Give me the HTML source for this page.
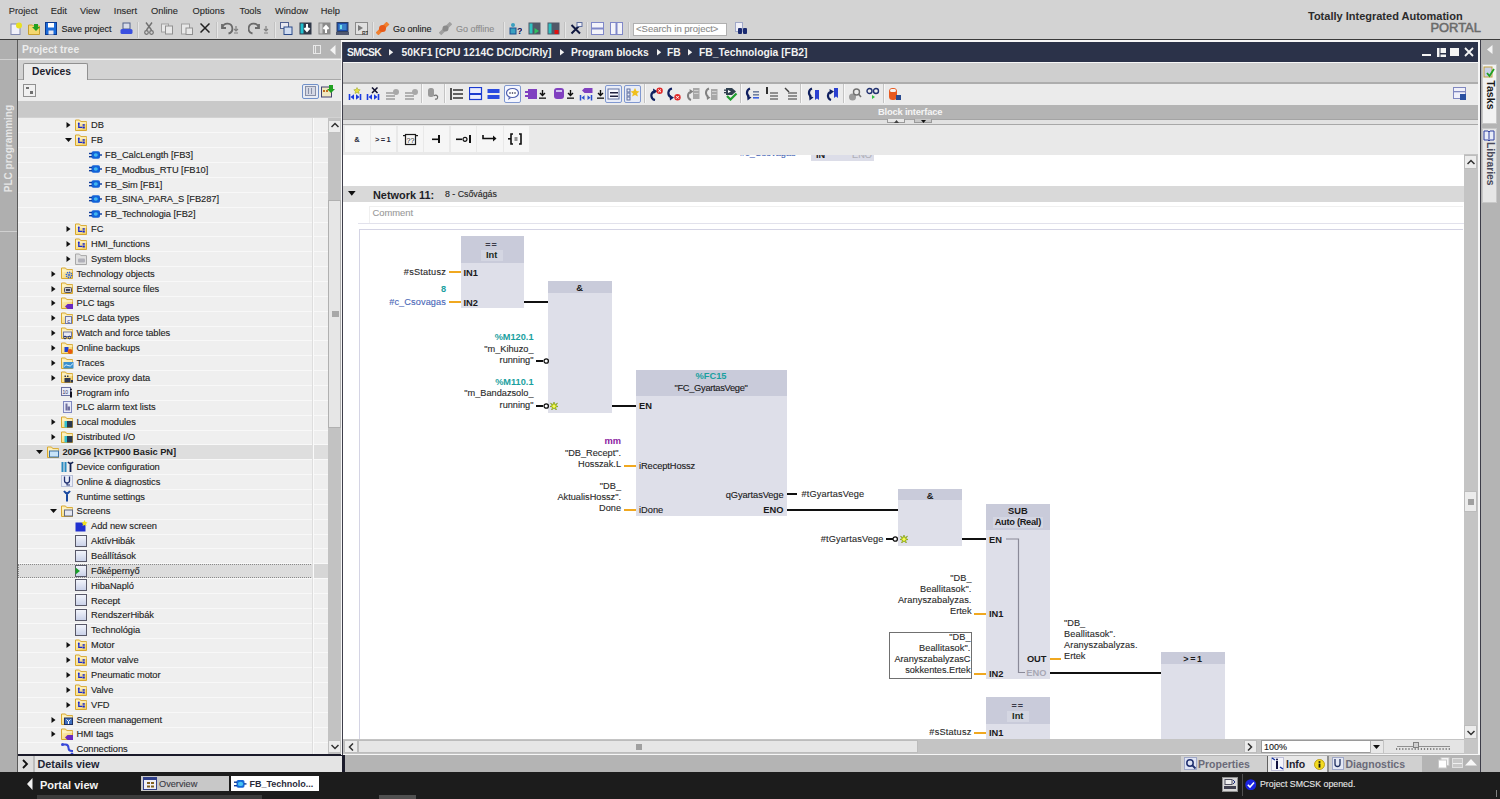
<!DOCTYPE html>
<html><head><meta charset="utf-8">
<style>
html,body{margin:0;padding:0;}
body{width:1500px;height:799px;overflow:hidden;position:relative;background:#d2d2d2;font-family:"Liberation Sans",sans-serif;}
.a{position:absolute;}
.t{position:absolute;white-space:pre;line-height:1.117;}
.t.n{-webkit-text-stroke:0.12px currentColor;}
</style></head><body>

<svg width="0" height="0" style="position:absolute"><defs><linearGradient id="fy" x1="0" y1="0" x2="1" y2="1"><stop offset="0" stop-color="#fff6c8"/><stop offset="1" stop-color="#f0cc60"/></linearGradient><linearGradient id="fs" x1="0" y1="0" x2="0" y2="1"><stop offset="0" stop-color="#f4f6fc"/><stop offset="1" stop-color="#c8d0e8"/></linearGradient></defs></svg>
<div class="a" style="left:0px;top:0px;width:1500px;height:39px;background:#d3d3d3;"></div>
<div class="t n" style="left:8.7px;top:5.88px;font-size:9.3px;color:#2a2a2a;font-weight:normal;">Project</div>
<div class="t n" style="left:50.8px;top:5.88px;font-size:9.3px;color:#2a2a2a;font-weight:normal;">Edit</div>
<div class="t n" style="left:80px;top:5.88px;font-size:9.3px;color:#2a2a2a;font-weight:normal;">View</div>
<div class="t n" style="left:113.8px;top:5.88px;font-size:9.3px;color:#2a2a2a;font-weight:normal;">Insert</div>
<div class="t n" style="left:151px;top:5.88px;font-size:9.3px;color:#2a2a2a;font-weight:normal;">Online</div>
<div class="t n" style="left:192.5px;top:5.88px;font-size:9.3px;color:#2a2a2a;font-weight:normal;">Options</div>
<div class="t n" style="left:239.5px;top:5.88px;font-size:9.3px;color:#2a2a2a;font-weight:normal;">Tools</div>
<div class="t n" style="left:275px;top:5.88px;font-size:9.3px;color:#2a2a2a;font-weight:normal;">Window</div>
<div class="t n" style="left:320.8px;top:5.88px;font-size:9.3px;color:#2a2a2a;font-weight:normal;">Help</div>
<div class="t" style="left:1308px;top:10.04px;font-size:11px;color:#2b2b2b;font-weight:bold;">Totally Integrated Automation</div>
<div class="t n" style="left:1430.5px;top:20.93px;font-size:12.9px;color:#6a6a6a;font-weight:normal;-webkit-text-stroke:0.55px #6a6a6a;">PORTAL</div>
<div class="t n" style="left:61.5px;top:24.36px;font-size:9px;color:#202020;font-weight:normal;">Save project</div>
<div class="t n" style="left:393px;top:24.36px;font-size:9px;color:#202020;font-weight:normal;">Go online</div>
<div class="t n" style="left:456px;top:24.36px;font-size:9px;color:#8c8c8c;font-weight:normal;">Go offline</div>
<div class="a" style="left:633px;top:22.7px;width:94px;height:13.6px;background:#ffffff;border:1px solid #b0b0b0;box-sizing:border-box;"></div>
<div class="t n" style="left:636px;top:23.90px;font-size:9.5px;color:#8a8a8a;font-weight:normal;">&lt;Search in project&gt;</div>
<div class="a" style="left:0px;top:39px;width:1500px;height:1.7px;background:#3a3a3a;"></div>
<div class="a" style="left:0px;top:40.3px;width:17px;height:731.7px;background:#afafaf;"></div>
<div class="a" style="left:0px;top:58.5px;width:17px;height:1.7px;background:#d0d0d0;"></div>
<div class="a" style="left:0px;top:230.5px;width:17px;height:1.2px;background:#d0d0d0;"></div>
<div class="a" style="left:17px;top:40.3px;width:1.2px;height:731.7px;background:#5a5a5a;"></div>
<div class="t" style="left:-38px;top:143px;width:94px;text-align:center;transform:rotate(-90deg);font-size:10px;font-weight:bold;color:#e6e6e6;">PLC programming</div>
<div class="a" style="left:18px;top:40.3px;width:322.7px;height:18.2px;background:#b5b5b5;"></div>
<div class="t" style="left:22px;top:43.59px;font-size:10.4px;color:#ececec;font-weight:bold;">Project tree</div>
<div class="a" style="left:18px;top:58.5px;width:322.7px;height:1.7px;background:#f4f4f4;"></div>
<div class="a" style="left:18px;top:60.2px;width:322.7px;height:20px;background:#d3d3d3;"></div>
<div class="a" style="left:18px;top:79px;width:322.7px;height:1.5px;background:#a8a8a8;"></div>
<div class="a" style="left:23px;top:63px;width:65px;height:17.5px;background:#ececec;border:1px solid #909090;border-bottom:none;box-sizing:border-box;border-radius:2px 2px 0 0;"></div>
<div class="t" style="left:32px;top:65.88px;font-size:10.3px;color:#1e1e2e;font-weight:bold;">Devices</div>
<div class="a" style="left:18px;top:80.2px;width:322.7px;height:21px;background:#ededed;"></div>
<div class="a" style="left:18px;top:101.2px;width:322.7px;height:16.3px;background:#c9c9c9;"></div>
<div class="a" style="left:18px;top:117.5px;width:312px;height:637px;background:#efefef;"></div>
<div class="a" style="left:18px;top:132.36px;width:312px;height:1px;background:#f8f8f8;"></div>
<svg class="a" style="left:65.5px;top:122.13000000000001px;" width="5" height="6" viewBox="0 0 5 6"><path d="M0.5 0 L4.5 3 L0.5 6z" fill="#101010"/></svg>
<svg class="a" style="left:75px;top:118.83000000000001px;" width="13" height="13" viewBox="0 0 13 13"><path d="M0.5 1 h4 l1.3 1.6 h5.7 v8.9 h-11z" fill="url(#fy)" stroke="#d8a830" stroke-width="1"/><path d="M1.5 4 h10" stroke="#fff8d8" stroke-width="1"/><circle cx="3.8" cy="4.6" r="1" fill="#1828d0"/><path d="M3.8 5 v3.3 h3.5" stroke="#1828d0" stroke-width="1.3" fill="none"/><rect x="7.6" y="5.2" width="2.2" height="1.5" fill="#1828d0"/><rect x="7.6" y="7.5" width="2.2" height="2" fill="#1828d0"/></svg>
<div class="t n" style="left:91px;top:120.11px;font-size:9.3px;color:#222222;font-weight:normal;letter-spacing:-0.05px;">DB</div>
<div class="a" style="left:18px;top:147.22000000000003px;width:312px;height:1px;background:#f8f8f8;"></div>
<svg class="a" style="left:64.5px;top:137.99px;" width="7" height="5" viewBox="0 0 7 5"><path d="M0 0 L7 0 L3.5 4z" fill="#101010"/></svg>
<svg class="a" style="left:75px;top:133.69px;" width="13" height="13" viewBox="0 0 13 13"><path d="M0.5 1 h4 l1.3 1.6 h5.7 v8.9 h-11z" fill="url(#fy)" stroke="#d8a830" stroke-width="1"/><path d="M1.5 4 h10" stroke="#fff8d8" stroke-width="1"/><circle cx="3.8" cy="4.6" r="1" fill="#1828d0"/><path d="M3.8 5 v3.3 h3.5" stroke="#1828d0" stroke-width="1.3" fill="none"/><rect x="7.6" y="5.2" width="2.2" height="1.5" fill="#1828d0"/><rect x="7.6" y="7.5" width="2.2" height="2" fill="#1828d0"/></svg>
<div class="t n" style="left:91px;top:134.97px;font-size:9.3px;color:#222222;font-weight:normal;letter-spacing:-0.05px;">FB</div>
<div class="a" style="left:18px;top:162.07999999999998px;width:312px;height:1px;background:#f8f8f8;"></div>
<svg class="a" style="left:89px;top:148.54999999999998px;" width="13" height="13" viewBox="0 0 13 13"><rect x="2.5" y="2.3" width="8.5" height="7.5" rx="1.8" fill="#1262d8"/><ellipse cx="6.8" cy="6" rx="2" ry="1.7" fill="#40b8f0"/><rect x="0" y="3.8" width="3" height="1.4" fill="#0c3a9a"/><rect x="0" y="7" width="3" height="1.4" fill="#0c3a9a"/><rect x="10.5" y="5.3" width="2.5" height="1.4" fill="#0c3a9a"/></svg>
<div class="t n" style="left:105px;top:149.83px;font-size:9.3px;color:#222222;font-weight:normal;letter-spacing:-0.05px;">FB_CalcLength [FB3]</div>
<div class="a" style="left:18px;top:176.94px;width:312px;height:1px;background:#f8f8f8;"></div>
<svg class="a" style="left:89px;top:163.40999999999997px;" width="13" height="13" viewBox="0 0 13 13"><rect x="2.5" y="2.3" width="8.5" height="7.5" rx="1.8" fill="#1262d8"/><ellipse cx="6.8" cy="6" rx="2" ry="1.7" fill="#40b8f0"/><rect x="0" y="3.8" width="3" height="1.4" fill="#0c3a9a"/><rect x="0" y="7" width="3" height="1.4" fill="#0c3a9a"/><rect x="10.5" y="5.3" width="2.5" height="1.4" fill="#0c3a9a"/></svg>
<div class="t n" style="left:105px;top:164.69px;font-size:9.3px;color:#222222;font-weight:normal;letter-spacing:-0.05px;">FB_Modbus_RTU [FB10]</div>
<div class="a" style="left:18px;top:191.8px;width:312px;height:1px;background:#f8f8f8;"></div>
<svg class="a" style="left:89px;top:178.26999999999998px;" width="13" height="13" viewBox="0 0 13 13"><rect x="2.5" y="2.3" width="8.5" height="7.5" rx="1.8" fill="#1262d8"/><ellipse cx="6.8" cy="6" rx="2" ry="1.7" fill="#40b8f0"/><rect x="0" y="3.8" width="3" height="1.4" fill="#0c3a9a"/><rect x="0" y="7" width="3" height="1.4" fill="#0c3a9a"/><rect x="10.5" y="5.3" width="2.5" height="1.4" fill="#0c3a9a"/></svg>
<div class="t n" style="left:105px;top:179.55px;font-size:9.3px;color:#222222;font-weight:normal;letter-spacing:-0.05px;">FB_Sim [FB1]</div>
<div class="a" style="left:18px;top:206.66000000000003px;width:312px;height:1px;background:#f8f8f8;"></div>
<svg class="a" style="left:89px;top:193.13px;" width="13" height="13" viewBox="0 0 13 13"><rect x="2.5" y="2.3" width="8.5" height="7.5" rx="1.8" fill="#1262d8"/><ellipse cx="6.8" cy="6" rx="2" ry="1.7" fill="#40b8f0"/><rect x="0" y="3.8" width="3" height="1.4" fill="#0c3a9a"/><rect x="0" y="7" width="3" height="1.4" fill="#0c3a9a"/><rect x="10.5" y="5.3" width="2.5" height="1.4" fill="#0c3a9a"/></svg>
<div class="t n" style="left:105px;top:194.41px;font-size:9.3px;color:#222222;font-weight:normal;letter-spacing:-0.05px;">FB_SINA_PARA_S [FB287]</div>
<div class="a" style="left:18px;top:221.51999999999998px;width:312px;height:1px;background:#f8f8f8;"></div>
<svg class="a" style="left:89px;top:207.98999999999998px;" width="13" height="13" viewBox="0 0 13 13"><rect x="2.5" y="2.3" width="8.5" height="7.5" rx="1.8" fill="#1262d8"/><ellipse cx="6.8" cy="6" rx="2" ry="1.7" fill="#40b8f0"/><rect x="0" y="3.8" width="3" height="1.4" fill="#0c3a9a"/><rect x="0" y="7" width="3" height="1.4" fill="#0c3a9a"/><rect x="10.5" y="5.3" width="2.5" height="1.4" fill="#0c3a9a"/></svg>
<div class="t n" style="left:105px;top:209.27px;font-size:9.3px;color:#222222;font-weight:normal;letter-spacing:-0.05px;">FB_Technologia [FB2]</div>
<div class="a" style="left:18px;top:236.38px;width:312px;height:1px;background:#f8f8f8;"></div>
<svg class="a" style="left:65.5px;top:226.14999999999998px;" width="5" height="6" viewBox="0 0 5 6"><path d="M0.5 0 L4.5 3 L0.5 6z" fill="#101010"/></svg>
<svg class="a" style="left:75px;top:222.84999999999997px;" width="13" height="13" viewBox="0 0 13 13"><path d="M0.5 1 h4 l1.3 1.6 h5.7 v8.9 h-11z" fill="url(#fy)" stroke="#d8a830" stroke-width="1"/><path d="M1.5 4 h10" stroke="#fff8d8" stroke-width="1"/><circle cx="3.8" cy="4.6" r="1" fill="#1828d0"/><path d="M3.8 5 v3.3 h3.5" stroke="#1828d0" stroke-width="1.3" fill="none"/><rect x="7.6" y="5.2" width="2.2" height="1.5" fill="#1828d0"/><rect x="7.6" y="7.5" width="2.2" height="2" fill="#1828d0"/></svg>
<div class="t n" style="left:91px;top:224.13px;font-size:9.3px;color:#222222;font-weight:normal;letter-spacing:-0.05px;">FC</div>
<div class="a" style="left:18px;top:251.24px;width:312px;height:1px;background:#f8f8f8;"></div>
<svg class="a" style="left:65.5px;top:241.01px;" width="5" height="6" viewBox="0 0 5 6"><path d="M0.5 0 L4.5 3 L0.5 6z" fill="#101010"/></svg>
<svg class="a" style="left:75px;top:237.70999999999998px;" width="13" height="13" viewBox="0 0 13 13"><path d="M0.5 1 h4 l1.3 1.6 h5.7 v8.9 h-11z" fill="url(#fy)" stroke="#d8a830" stroke-width="1"/><path d="M1.5 4 h10" stroke="#fff8d8" stroke-width="1"/><circle cx="3.8" cy="4.6" r="1" fill="#1828d0"/><path d="M3.8 5 v3.3 h3.5" stroke="#1828d0" stroke-width="1.3" fill="none"/><rect x="7.6" y="5.2" width="2.2" height="1.5" fill="#1828d0"/><rect x="7.6" y="7.5" width="2.2" height="2" fill="#1828d0"/></svg>
<div class="t n" style="left:91px;top:238.99px;font-size:9.3px;color:#222222;font-weight:normal;letter-spacing:-0.05px;">HMI_functions</div>
<div class="a" style="left:18px;top:266.1px;width:312px;height:1px;background:#f8f8f8;"></div>
<svg class="a" style="left:65.5px;top:255.87px;" width="5" height="6" viewBox="0 0 5 6"><path d="M0.5 0 L4.5 3 L0.5 6z" fill="#101010"/></svg>
<svg class="a" style="left:75px;top:252.57px;" width="13" height="13" viewBox="0 0 13 13"><path d="M0.5 1 h4 l1.3 1.6 h5.7 v8.9 h-11z" fill="#e0e0e0" stroke="#a8a8a8"/><rect x="3" y="5.5" width="7" height="4" rx="1" fill="#b0b0b8"/></svg>
<div class="t n" style="left:91px;top:253.85px;font-size:9.3px;color:#222222;font-weight:normal;letter-spacing:-0.05px;">System blocks</div>
<div class="a" style="left:18px;top:280.96000000000004px;width:312px;height:1px;background:#f8f8f8;"></div>
<svg class="a" style="left:51.0px;top:270.73px;" width="5" height="6" viewBox="0 0 5 6"><path d="M0.5 0 L4.5 3 L0.5 6z" fill="#101010"/></svg>
<svg class="a" style="left:60.5px;top:267.43px;" width="13" height="13" viewBox="0 0 13 13"><path d="M0.5 1 h4 l1.3 1.6 h5.7 v8.9 h-11z" fill="url(#fy)" stroke="#d8a830" stroke-width="1"/><path d="M1.5 4 h10" stroke="#fff8d8" stroke-width="1"/><circle cx="8" cy="8" r="2.6" fill="none" stroke="#2a60e0" stroke-width="1.6" stroke-dasharray="1.2 0.8"/><circle cx="8" cy="8" r="1" fill="#2a60e0"/></svg>
<div class="t n" style="left:76.5px;top:268.71px;font-size:9.3px;color:#222222;font-weight:normal;letter-spacing:-0.05px;">Technology objects</div>
<div class="a" style="left:18px;top:295.82px;width:312px;height:1px;background:#f8f8f8;"></div>
<svg class="a" style="left:51.0px;top:285.59px;" width="5" height="6" viewBox="0 0 5 6"><path d="M0.5 0 L4.5 3 L0.5 6z" fill="#101010"/></svg>
<svg class="a" style="left:60.5px;top:282.28999999999996px;" width="13" height="13" viewBox="0 0 13 13"><path d="M0.5 1 h4 l1.3 1.6 h5.7 v8.9 h-11z" fill="url(#fy)" stroke="#d8a830" stroke-width="1"/><path d="M1.5 4 h10" stroke="#fff8d8" stroke-width="1"/><rect x="3.5" y="5.5" width="7" height="5" rx="1" fill="#c8c8d0" stroke="#505060"/><rect x="5" y="7" width="4" height="2" fill="#404050"/></svg>
<div class="t n" style="left:76.5px;top:283.57px;font-size:9.3px;color:#222222;font-weight:normal;letter-spacing:-0.05px;">External source files</div>
<div class="a" style="left:18px;top:310.68px;width:312px;height:1px;background:#f8f8f8;"></div>
<svg class="a" style="left:51.0px;top:300.45px;" width="5" height="6" viewBox="0 0 5 6"><path d="M0.5 0 L4.5 3 L0.5 6z" fill="#101010"/></svg>
<svg class="a" style="left:60.5px;top:297.15px;" width="13" height="13" viewBox="0 0 13 13"><path d="M0.5 1 h4 l1.3 1.6 h5.7 v8.9 h-11z" fill="url(#fy)" stroke="#d8a830" stroke-width="1"/><path d="M1.5 4 h10" stroke="#fff8d8" stroke-width="1"/><path d="M4 9.5 l2.5 -2.5 h5.5 v5 h-5.5z" fill="#6a28c0"/></svg>
<div class="t n" style="left:76.5px;top:298.43px;font-size:9.3px;color:#222222;font-weight:normal;letter-spacing:-0.05px;">PLC tags</div>
<div class="a" style="left:18px;top:325.54px;width:312px;height:1px;background:#f8f8f8;"></div>
<svg class="a" style="left:51.0px;top:315.31px;" width="5" height="6" viewBox="0 0 5 6"><path d="M0.5 0 L4.5 3 L0.5 6z" fill="#101010"/></svg>
<svg class="a" style="left:60.5px;top:312.01px;" width="13" height="13" viewBox="0 0 13 13"><path d="M0.5 1 h4 l1.3 1.6 h5.7 v8.9 h-11z" fill="url(#fy)" stroke="#d8a830" stroke-width="1"/><path d="M1.5 4 h10" stroke="#fff8d8" stroke-width="1"/><rect x="4.5" y="4.5" width="6" height="7" fill="#e8eaf8" stroke="#7078a8"/><text x="7.5" y="10.5" font-size="5.5" text-anchor="middle" fill="#303060" font-family="Liberation Sans">c</text></svg>
<div class="t n" style="left:76.5px;top:313.29px;font-size:9.3px;color:#222222;font-weight:normal;letter-spacing:-0.05px;">PLC data types</div>
<div class="a" style="left:18px;top:340.4px;width:312px;height:1px;background:#f8f8f8;"></div>
<svg class="a" style="left:51.0px;top:330.16999999999996px;" width="5" height="6" viewBox="0 0 5 6"><path d="M0.5 0 L4.5 3 L0.5 6z" fill="#101010"/></svg>
<svg class="a" style="left:60.5px;top:326.86999999999995px;" width="13" height="13" viewBox="0 0 13 13"><path d="M0.5 1 h4 l1.3 1.6 h5.7 v8.9 h-11z" fill="url(#fy)" stroke="#d8a830" stroke-width="1"/><path d="M1.5 4 h10" stroke="#fff8d8" stroke-width="1"/><rect x="2.5" y="5" width="8" height="4.5" fill="#e8eaf4" stroke="#7078a8"/><circle cx="4" cy="10.5" r="1.3" fill="none" stroke="#203070"/><circle cx="8.5" cy="10.5" r="1.3" fill="none" stroke="#203070"/></svg>
<div class="t n" style="left:76.5px;top:328.15px;font-size:9.3px;color:#222222;font-weight:normal;letter-spacing:-0.05px;">Watch and force tables</div>
<div class="a" style="left:18px;top:355.26px;width:312px;height:1px;background:#f8f8f8;"></div>
<svg class="a" style="left:51.0px;top:345.03px;" width="5" height="6" viewBox="0 0 5 6"><path d="M0.5 0 L4.5 3 L0.5 6z" fill="#101010"/></svg>
<svg class="a" style="left:60.5px;top:341.72999999999996px;" width="13" height="13" viewBox="0 0 13 13"><path d="M0.5 1 h4 l1.3 1.6 h5.7 v8.9 h-11z" fill="url(#fy)" stroke="#d8a830" stroke-width="1"/><path d="M1.5 4 h10" stroke="#fff8d8" stroke-width="1"/><rect x="3.5" y="5" width="4" height="5" fill="#2040d0"/><circle cx="9" cy="9.5" r="2.4" fill="#e85a10"/></svg>
<div class="t n" style="left:76.5px;top:343.01px;font-size:9.3px;color:#222222;font-weight:normal;letter-spacing:-0.05px;">Online backups</div>
<div class="a" style="left:18px;top:370.12px;width:312px;height:1px;background:#f8f8f8;"></div>
<svg class="a" style="left:51.0px;top:359.89px;" width="5" height="6" viewBox="0 0 5 6"><path d="M0.5 0 L4.5 3 L0.5 6z" fill="#101010"/></svg>
<svg class="a" style="left:60.5px;top:356.59px;" width="13" height="13" viewBox="0 0 13 13"><path d="M0.5 1 h4 l1.3 1.6 h5.7 v8.9 h-11z" fill="url(#fy)" stroke="#d8a830" stroke-width="1"/><path d="M1.5 4 h10" stroke="#fff8d8" stroke-width="1"/><rect x="2.5" y="5" width="10" height="6.5" fill="#3a90d0"/><path d="M3 9.5 q2 -3 4 -1 t5 -2" stroke="#d8f0ff" stroke-width="1" fill="none"/></svg>
<div class="t n" style="left:76.5px;top:357.87px;font-size:9.3px;color:#222222;font-weight:normal;letter-spacing:-0.05px;">Traces</div>
<div class="a" style="left:18px;top:384.98px;width:312px;height:1px;background:#f8f8f8;"></div>
<svg class="a" style="left:51.0px;top:374.75px;" width="5" height="6" viewBox="0 0 5 6"><path d="M0.5 0 L4.5 3 L0.5 6z" fill="#101010"/></svg>
<svg class="a" style="left:60.5px;top:371.45px;" width="13" height="13" viewBox="0 0 13 13"><path d="M0.5 1 h4 l1.3 1.6 h5.7 v8.9 h-11z" fill="url(#fy)" stroke="#d8a830" stroke-width="1"/><path d="M1.5 4 h10" stroke="#fff8d8" stroke-width="1"/><rect x="3.5" y="4.5" width="1.5" height="1.5" fill="#303850"/><rect x="6" y="4.5" width="1.5" height="1.5" fill="#303850"/><rect x="3.5" y="7" width="6" height="4.5" fill="#303850"/><rect x="10" y="9" width="2" height="2.5" fill="#303850"/></svg>
<div class="t n" style="left:76.5px;top:372.73px;font-size:9.3px;color:#222222;font-weight:normal;letter-spacing:-0.05px;">Device proxy data</div>
<div class="a" style="left:18px;top:399.84000000000003px;width:312px;height:1px;background:#f8f8f8;"></div>
<svg class="a" style="left:60.5px;top:386.31px;" width="13" height="13" viewBox="0 0 13 13"><rect x="0.5" y="1.5" width="9" height="8" fill="#e8ecf8" stroke="#6a70a0"/><text x="1.5" y="7.5" font-size="5" fill="#303060" font-family="Liberation Sans">10</text><circle cx="10" cy="3.5" r="1" fill="#101020"/><rect x="9" y="5.5" width="2" height="6" fill="#101020"/></svg>
<div class="t n" style="left:76.5px;top:387.59px;font-size:9.3px;color:#222222;font-weight:normal;letter-spacing:-0.05px;">Program info</div>
<div class="a" style="left:18px;top:414.7px;width:312px;height:1px;background:#f8f8f8;"></div>
<svg class="a" style="left:60.5px;top:401.16999999999996px;" width="13" height="13" viewBox="0 0 13 13"><rect x="2.5" y="0.5" width="8" height="11" fill="#e8eaf8" stroke="#8088c0"/><rect x="4.5" y="2.5" width="2" height="7" fill="#7070a0"/><rect x="6.5" y="5.5" width="2.5" height="4" fill="#7070a0"/></svg>
<div class="t n" style="left:76.5px;top:402.45px;font-size:9.3px;color:#222222;font-weight:normal;letter-spacing:-0.05px;">PLC alarm text lists</div>
<div class="a" style="left:18px;top:429.56px;width:312px;height:1px;background:#f8f8f8;"></div>
<svg class="a" style="left:51.0px;top:419.33px;" width="5" height="6" viewBox="0 0 5 6"><path d="M0.5 0 L4.5 3 L0.5 6z" fill="#101010"/></svg>
<svg class="a" style="left:60.5px;top:416.03px;" width="13" height="13" viewBox="0 0 13 13"><path d="M0.5 1 h4 l1.3 1.6 h5.7 v8.9 h-11z" fill="url(#fy)" stroke="#d8a830" stroke-width="1"/><path d="M1.5 4 h10" stroke="#fff8d8" stroke-width="1"/><rect x="3.5" y="5" width="2.5" height="6.5" fill="#30c0d0"/><rect x="6" y="5" width="5.5" height="6.5" fill="#283850"/></svg>
<div class="t n" style="left:76.5px;top:417.31px;font-size:9.3px;color:#222222;font-weight:normal;letter-spacing:-0.05px;">Local modules</div>
<div class="a" style="left:18px;top:444.42px;width:312px;height:1px;background:#f8f8f8;"></div>
<svg class="a" style="left:51.0px;top:434.19px;" width="5" height="6" viewBox="0 0 5 6"><path d="M0.5 0 L4.5 3 L0.5 6z" fill="#101010"/></svg>
<svg class="a" style="left:60.5px;top:430.89px;" width="13" height="13" viewBox="0 0 13 13"><path d="M0.5 1 h4 l1.3 1.6 h5.7 v8.9 h-11z" fill="url(#fy)" stroke="#d8a830" stroke-width="1"/><path d="M1.5 4 h10" stroke="#fff8d8" stroke-width="1"/><rect x="3.5" y="5" width="2.5" height="6.5" fill="#30c0d0"/><rect x="6" y="5" width="5.5" height="6.5" fill="#283850"/></svg>
<div class="t n" style="left:76.5px;top:432.17px;font-size:9.3px;color:#222222;font-weight:normal;letter-spacing:-0.05px;">Distributed I/O</div>
<div class="a" style="left:18px;top:459.28px;width:312px;height:1px;background:#f8f8f8;"></div>
<div class="a" style="left:18px;top:445.41999999999996px;width:310px;height:13.86px;background:#dedede;"></div>
<svg class="a" style="left:36.0px;top:450.04999999999995px;" width="7" height="5" viewBox="0 0 7 5"><path d="M0 0 L7 0 L3.5 4z" fill="#101010"/></svg>
<svg class="a" style="left:46.5px;top:445.74999999999994px;" width="13" height="13" viewBox="0 0 13 13"><path d="M0.5 1 h4 l1.3 1.6 h5.7 v8.9 h-11z" fill="url(#fy)" stroke="#d8a830" stroke-width="1"/><path d="M1.5 4 h10" stroke="#fff8d8" stroke-width="1"/><rect x="2.5" y="5" width="9" height="6" fill="#c8e4f8" stroke="#3a70a8"/></svg>
<div class="t" style="left:62.5px;top:447.03px;font-size:9.3px;color:#222222;font-weight:bold;letter-spacing:-0.05px;">20PG6 [KTP900 Basic PN]</div>
<div class="a" style="left:18px;top:474.14px;width:312px;height:1px;background:#f8f8f8;"></div>
<svg class="a" style="left:60.5px;top:460.60999999999996px;" width="13" height="13" viewBox="0 0 13 13"><rect x="0.5" y="1" width="2" height="10" fill="#2a8ac0"/><rect x="3.5" y="1" width="2" height="10" fill="#2a8ac0"/><path d="M7 1 q2.5 3 5 0 M9.5 3 v8" stroke="#102050" stroke-width="1.8" fill="none"/></svg>
<div class="t n" style="left:76.5px;top:461.89px;font-size:9.3px;color:#222222;font-weight:normal;letter-spacing:-0.05px;">Device configuration</div>
<div class="a" style="left:18px;top:489.0px;width:312px;height:1px;background:#f8f8f8;"></div>
<svg class="a" style="left:60.5px;top:475.46999999999997px;" width="13" height="13" viewBox="0 0 13 13"><rect x="0.5" y="0.5" width="11" height="11" fill="#e8ecf8" stroke="#b8c0d8"/><path d="M3.5 1.5 v4 a2.5 2.5 0 0 0 5 0 v-4" stroke="#203070" stroke-width="1.3" fill="none"/><path d="M6 8 v2 h3" stroke="#203070" stroke-width="1.1" fill="none"/></svg>
<div class="t n" style="left:76.5px;top:476.75px;font-size:9.3px;color:#222222;font-weight:normal;letter-spacing:-0.05px;">Online &amp; diagnostics</div>
<div class="a" style="left:18px;top:503.86px;width:312px;height:1px;background:#f8f8f8;"></div>
<svg class="a" style="left:60.5px;top:490.33px;" width="13" height="13" viewBox="0 0 13 13"><path d="M3 1 q3 4.5 6 0 M6 4 v7.5" stroke="#1848a0" stroke-width="2" fill="none"/></svg>
<div class="t n" style="left:76.5px;top:491.61px;font-size:9.3px;color:#222222;font-weight:normal;letter-spacing:-0.05px;">Runtime settings</div>
<div class="a" style="left:18px;top:518.72px;width:312px;height:1px;background:#f8f8f8;"></div>
<svg class="a" style="left:50.0px;top:509.49px;" width="7" height="5" viewBox="0 0 7 5"><path d="M0 0 L7 0 L3.5 4z" fill="#101010"/></svg>
<svg class="a" style="left:60.5px;top:505.19px;" width="13" height="13" viewBox="0 0 13 13"><path d="M0.5 1 h4 l1.3 1.6 h5.7 v8.9 h-11z" fill="url(#fy)" stroke="#d8a830" stroke-width="1"/><path d="M1.5 4 h10" stroke="#fff8d8" stroke-width="1"/><rect x="3.5" y="5" width="8" height="6" fill="#e4e6f0" stroke="#606880"/></svg>
<div class="t n" style="left:76.5px;top:506.47px;font-size:9.3px;color:#222222;font-weight:normal;letter-spacing:-0.05px;">Screens</div>
<div class="a" style="left:18px;top:533.58px;width:312px;height:1px;background:#f8f8f8;"></div>
<svg class="a" style="left:75px;top:520.0500000000001px;" width="13" height="13" viewBox="0 0 13 13"><rect x="0.5" y="2.5" width="10" height="9" fill="#2030d0"/><path d="M9.5 0 l1 2 l2 0.5 l-1.5 1.5 l0.5 2 l-2 -1 l-2 1 l0.5 -2 l-1.5 -1.5 l2 -0.5z" fill="#f0e020"/></svg>
<div class="t n" style="left:91px;top:521.33px;font-size:9.3px;color:#222222;font-weight:normal;letter-spacing:-0.05px;">Add new screen</div>
<div class="a" style="left:18px;top:548.4399999999999px;width:312px;height:1px;background:#f8f8f8;"></div>
<svg class="a" style="left:75px;top:534.91px;" width="13" height="13" viewBox="0 0 13 13"><rect x="0.5" y="0.5" width="11" height="11" fill="url(#fs)" stroke="#585868"/></svg>
<div class="t n" style="left:91px;top:536.19px;font-size:9.3px;color:#222222;font-weight:normal;letter-spacing:-0.05px;">AktívHibák</div>
<div class="a" style="left:18px;top:563.3000000000001px;width:312px;height:1px;background:#f8f8f8;"></div>
<svg class="a" style="left:75px;top:549.7700000000001px;" width="13" height="13" viewBox="0 0 13 13"><rect x="0.5" y="0.5" width="11" height="11" fill="url(#fs)" stroke="#585868"/></svg>
<div class="t n" style="left:91px;top:551.05px;font-size:9.3px;color:#222222;font-weight:normal;letter-spacing:-0.05px;">Beállítások</div>
<div class="a" style="left:18px;top:578.16px;width:312px;height:1px;background:#f8f8f8;"></div>
<div class="a" style="left:18px;top:564.3px;width:294.5px;height:13.86px;background:#dcdcdc;border:1px dotted #8a8a8a;box-sizing:border-box;"></div>
<div class="a" style="left:313px;top:564.3px;width:16px;height:13.86px;background:#d6d6d6;"></div>
<svg class="a" style="left:75px;top:564.63px;" width="13" height="13" viewBox="0 0 13 13"><rect x="0.5" y="0.5" width="11" height="11" fill="url(#fs)" stroke="#585868"/><path d="M0.5 2.5 l4.5 3.5 l-4.5 3.5z" fill="#18a028"/></svg>
<div class="t n" style="left:91px;top:565.91px;font-size:9.3px;color:#222222;font-weight:normal;letter-spacing:-0.05px;">Főképernyő</div>
<div class="a" style="left:18px;top:593.02px;width:312px;height:1px;background:#f8f8f8;"></div>
<svg class="a" style="left:75px;top:579.49px;" width="13" height="13" viewBox="0 0 13 13"><rect x="0.5" y="0.5" width="11" height="11" fill="url(#fs)" stroke="#585868"/></svg>
<div class="t n" style="left:91px;top:580.77px;font-size:9.3px;color:#222222;font-weight:normal;letter-spacing:-0.05px;">HibaNapló</div>
<div class="a" style="left:18px;top:607.88px;width:312px;height:1px;background:#f8f8f8;"></div>
<svg class="a" style="left:75px;top:594.35px;" width="13" height="13" viewBox="0 0 13 13"><rect x="0.5" y="0.5" width="11" height="11" fill="url(#fs)" stroke="#585868"/></svg>
<div class="t n" style="left:91px;top:595.63px;font-size:9.3px;color:#222222;font-weight:normal;letter-spacing:-0.05px;">Recept</div>
<div class="a" style="left:18px;top:622.74px;width:312px;height:1px;background:#f8f8f8;"></div>
<svg class="a" style="left:75px;top:609.21px;" width="13" height="13" viewBox="0 0 13 13"><rect x="0.5" y="0.5" width="11" height="11" fill="url(#fs)" stroke="#585868"/></svg>
<div class="t n" style="left:91px;top:610.49px;font-size:9.3px;color:#222222;font-weight:normal;letter-spacing:-0.05px;">RendszerHibák</div>
<div class="a" style="left:18px;top:637.6px;width:312px;height:1px;background:#f8f8f8;"></div>
<svg class="a" style="left:75px;top:624.07px;" width="13" height="13" viewBox="0 0 13 13"><rect x="0.5" y="0.5" width="11" height="11" fill="url(#fs)" stroke="#585868"/></svg>
<div class="t n" style="left:91px;top:625.35px;font-size:9.3px;color:#222222;font-weight:normal;letter-spacing:-0.05px;">Technológia</div>
<div class="a" style="left:18px;top:652.46px;width:312px;height:1px;background:#f8f8f8;"></div>
<svg class="a" style="left:65.5px;top:642.23px;" width="5" height="6" viewBox="0 0 5 6"><path d="M0.5 0 L4.5 3 L0.5 6z" fill="#101010"/></svg>
<svg class="a" style="left:75px;top:638.9300000000001px;" width="13" height="13" viewBox="0 0 13 13"><path d="M0.5 1 h4 l1.3 1.6 h5.7 v8.9 h-11z" fill="url(#fy)" stroke="#d8a830" stroke-width="1"/><path d="M1.5 4 h10" stroke="#fff8d8" stroke-width="1"/><circle cx="3.8" cy="4.6" r="1" fill="#1828d0"/><path d="M3.8 5 v3.3 h3.5" stroke="#1828d0" stroke-width="1.3" fill="none"/><rect x="7.6" y="5.2" width="2.2" height="1.5" fill="#1828d0"/><rect x="7.6" y="7.5" width="2.2" height="2" fill="#1828d0"/></svg>
<div class="t n" style="left:91px;top:640.21px;font-size:9.3px;color:#222222;font-weight:normal;letter-spacing:-0.05px;">Motor</div>
<div class="a" style="left:18px;top:667.32px;width:312px;height:1px;background:#f8f8f8;"></div>
<svg class="a" style="left:65.5px;top:657.09px;" width="5" height="6" viewBox="0 0 5 6"><path d="M0.5 0 L4.5 3 L0.5 6z" fill="#101010"/></svg>
<svg class="a" style="left:75px;top:653.7900000000001px;" width="13" height="13" viewBox="0 0 13 13"><path d="M0.5 1 h4 l1.3 1.6 h5.7 v8.9 h-11z" fill="url(#fy)" stroke="#d8a830" stroke-width="1"/><path d="M1.5 4 h10" stroke="#fff8d8" stroke-width="1"/><circle cx="3.8" cy="4.6" r="1" fill="#1828d0"/><path d="M3.8 5 v3.3 h3.5" stroke="#1828d0" stroke-width="1.3" fill="none"/><rect x="7.6" y="5.2" width="2.2" height="1.5" fill="#1828d0"/><rect x="7.6" y="7.5" width="2.2" height="2" fill="#1828d0"/></svg>
<div class="t n" style="left:91px;top:655.07px;font-size:9.3px;color:#222222;font-weight:normal;letter-spacing:-0.05px;">Motor valve</div>
<div class="a" style="left:18px;top:682.18px;width:312px;height:1px;background:#f8f8f8;"></div>
<svg class="a" style="left:65.5px;top:671.9499999999999px;" width="5" height="6" viewBox="0 0 5 6"><path d="M0.5 0 L4.5 3 L0.5 6z" fill="#101010"/></svg>
<svg class="a" style="left:75px;top:668.65px;" width="13" height="13" viewBox="0 0 13 13"><path d="M0.5 1 h4 l1.3 1.6 h5.7 v8.9 h-11z" fill="url(#fy)" stroke="#d8a830" stroke-width="1"/><path d="M1.5 4 h10" stroke="#fff8d8" stroke-width="1"/><circle cx="3.8" cy="4.6" r="1" fill="#1828d0"/><path d="M3.8 5 v3.3 h3.5" stroke="#1828d0" stroke-width="1.3" fill="none"/><rect x="7.6" y="5.2" width="2.2" height="1.5" fill="#1828d0"/><rect x="7.6" y="7.5" width="2.2" height="2" fill="#1828d0"/></svg>
<div class="t n" style="left:91px;top:669.93px;font-size:9.3px;color:#222222;font-weight:normal;letter-spacing:-0.05px;">Pneumatic motor</div>
<div class="a" style="left:18px;top:697.04px;width:312px;height:1px;background:#f8f8f8;"></div>
<svg class="a" style="left:65.5px;top:686.81px;" width="5" height="6" viewBox="0 0 5 6"><path d="M0.5 0 L4.5 3 L0.5 6z" fill="#101010"/></svg>
<svg class="a" style="left:75px;top:683.51px;" width="13" height="13" viewBox="0 0 13 13"><path d="M0.5 1 h4 l1.3 1.6 h5.7 v8.9 h-11z" fill="url(#fy)" stroke="#d8a830" stroke-width="1"/><path d="M1.5 4 h10" stroke="#fff8d8" stroke-width="1"/><circle cx="3.8" cy="4.6" r="1" fill="#1828d0"/><path d="M3.8 5 v3.3 h3.5" stroke="#1828d0" stroke-width="1.3" fill="none"/><rect x="7.6" y="5.2" width="2.2" height="1.5" fill="#1828d0"/><rect x="7.6" y="7.5" width="2.2" height="2" fill="#1828d0"/></svg>
<div class="t n" style="left:91px;top:684.79px;font-size:9.3px;color:#222222;font-weight:normal;letter-spacing:-0.05px;">Valve</div>
<div class="a" style="left:18px;top:711.9px;width:312px;height:1px;background:#f8f8f8;"></div>
<svg class="a" style="left:65.5px;top:701.67px;" width="5" height="6" viewBox="0 0 5 6"><path d="M0.5 0 L4.5 3 L0.5 6z" fill="#101010"/></svg>
<svg class="a" style="left:75px;top:698.37px;" width="13" height="13" viewBox="0 0 13 13"><path d="M0.5 1 h4 l1.3 1.6 h5.7 v8.9 h-11z" fill="url(#fy)" stroke="#d8a830" stroke-width="1"/><path d="M1.5 4 h10" stroke="#fff8d8" stroke-width="1"/><circle cx="3.8" cy="4.6" r="1" fill="#1828d0"/><path d="M3.8 5 v3.3 h3.5" stroke="#1828d0" stroke-width="1.3" fill="none"/><rect x="7.6" y="5.2" width="2.2" height="1.5" fill="#1828d0"/><rect x="7.6" y="7.5" width="2.2" height="2" fill="#1828d0"/></svg>
<div class="t n" style="left:91px;top:699.65px;font-size:9.3px;color:#222222;font-weight:normal;letter-spacing:-0.05px;">VFD</div>
<div class="a" style="left:18px;top:726.76px;width:312px;height:1px;background:#f8f8f8;"></div>
<svg class="a" style="left:51.0px;top:716.53px;" width="5" height="6" viewBox="0 0 5 6"><path d="M0.5 0 L4.5 3 L0.5 6z" fill="#101010"/></svg>
<svg class="a" style="left:60.5px;top:713.23px;" width="13" height="13" viewBox="0 0 13 13"><path d="M0.5 1 h4 l1.3 1.6 h5.7 v8.9 h-11z" fill="url(#fy)" stroke="#d8a830" stroke-width="1"/><path d="M1.5 4 h10" stroke="#fff8d8" stroke-width="1"/><rect x="3.5" y="5" width="8" height="6.5" fill="#4070c0" stroke="#203060"/><path d="M5.5 6.5 l2 2 l2 -2 M7.5 8.5 v2.5" stroke="#ffffff" stroke-width="1" fill="none"/></svg>
<div class="t n" style="left:76.5px;top:714.51px;font-size:9.3px;color:#222222;font-weight:normal;letter-spacing:-0.05px;">Screen management</div>
<div class="a" style="left:18px;top:741.62px;width:312px;height:1px;background:#f8f8f8;"></div>
<svg class="a" style="left:51.0px;top:731.39px;" width="5" height="6" viewBox="0 0 5 6"><path d="M0.5 0 L4.5 3 L0.5 6z" fill="#101010"/></svg>
<svg class="a" style="left:60.5px;top:728.09px;" width="13" height="13" viewBox="0 0 13 13"><path d="M0.5 1 h4 l1.3 1.6 h5.7 v8.9 h-11z" fill="url(#fy)" stroke="#d8a830" stroke-width="1"/><path d="M1.5 4 h10" stroke="#fff8d8" stroke-width="1"/><path d="M4 9.5 l2.5 -2.5 h5.5 v5 h-5.5z" fill="#6a28c0"/></svg>
<div class="t n" style="left:76.5px;top:729.37px;font-size:9.3px;color:#222222;font-weight:normal;letter-spacing:-0.05px;">HMI tags</div>
<div class="a" style="left:18px;top:756.48px;width:312px;height:1px;background:#f8f8f8;"></div>
<svg class="a" style="left:60.5px;top:742.95px;" width="13" height="13" viewBox="0 0 13 13"><path d="M1.5 1.5 h3 q3 0 3 3.5 q0 3 3.5 3 h1" stroke="#3848d8" stroke-width="2" fill="none"/><circle cx="1.5" cy="1.5" r="1.5" fill="#3848d8"/><circle cx="11" cy="11" r="1.5" fill="#3848d8"/></svg>
<div class="t n" style="left:76.5px;top:744.23px;font-size:9.3px;color:#222222;font-weight:normal;letter-spacing:-0.05px;">Connections</div>
<div class="a" style="left:312px;top:117.5px;width:1px;height:637px;background:#dedede;"></div>
<div class="a" style="left:313px;top:117.5px;width:1px;height:637px;background:#fafafa;"></div>
<div class="a" style="left:328px;top:117.5px;width:12.7px;height:637px;background:#c2c2c2;"></div>
<div class="a" style="left:328px;top:119.5px;width:12.7px;height:13px;background:#ececec;border:1px solid #c0c0c0;box-sizing:border-box;"></div>
<svg class="a" style="left:331px;top:122px;" width="8" height="6" viewBox="0 0 8 6"><path d="M0.5 5 L4 1.5 L7.5 5" stroke="#303030" stroke-width="1.5" fill="none"/></svg>
<div class="a" style="left:328px;top:200px;width:12.7px;height:228px;background:#e6e6e6;border:1px solid #b0b0b0;box-sizing:border-box;"></div>
<div class="a" style="left:331.5px;top:311px;width:7px;height:6px;background:#a8a8a8;"></div>
<div class="a" style="left:328px;top:740px;width:12.7px;height:13px;background:#ececec;border:1px solid #c0c0c0;box-sizing:border-box;"></div>
<svg class="a" style="left:331px;top:744px;" width="8" height="6" viewBox="0 0 8 6"><path d="M0.5 1 L4 4.5 L7.5 1" stroke="#303030" stroke-width="1.5" fill="none"/></svg>
<div class="a" style="left:18px;top:754px;width:324px;height:2px;background:#1a1a2a;"></div>
<div class="a" style="left:18px;top:756px;width:324px;height:16px;background:#e4e4e4;"></div>
<div class="a" style="left:18px;top:756px;width:15px;height:16px;background:#dedede;"></div>
<div class="a" style="left:33px;top:756px;width:1.5px;height:16px;background:#bdbdbd;"></div>
<svg class="a" style="left:21px;top:759px;" width="8" height="10" viewBox="0 0 8 10"><path d="M2 1 L6 5 L2 9" stroke="#101010" stroke-width="1.8" fill="none"/></svg>
<div class="t" style="left:37.5px;top:758.23px;font-size:10.8px;color:#1e2636;font-weight:bold;">Details view</div>
<div class="a" style="left:340.7px;top:40.3px;width:1140.8px;height:714.5px;background:#f6f6f6;"></div>
<div class="a" style="left:342px;top:42.3px;width:1px;height:712.5px;background:#3e3e4a;"></div>
<div class="a" style="left:343px;top:42px;width:1134.5px;height:20px;background:#2b3249;"></div>
<div class="t" style="left:347px;top:46.68px;font-size:10.3px;color:#f2f2f2;font-weight:bold;letter-spacing:-0.6px;">SMCSK</div>
<svg class="a" style="left:389px;top:49.2px;" width="5" height="6.5" viewBox="0 0 5 6.5"><path d="M0 0 L4.2 3.2 L0 6.4z" fill="#f0f0f0"/></svg>
<div class="t" style="left:401.5px;top:46.68px;font-size:10.3px;color:#f2f2f2;font-weight:bold;letter-spacing:0px;">50KF1 [CPU 1214C DC/DC/Rly]</div>
<svg class="a" style="left:560px;top:49.2px;" width="5" height="6.5" viewBox="0 0 5 6.5"><path d="M0 0 L4.2 3.2 L0 6.4z" fill="#f0f0f0"/></svg>
<div class="t" style="left:571px;top:46.68px;font-size:10.3px;color:#f2f2f2;font-weight:bold;letter-spacing:0px;">Program blocks</div>
<svg class="a" style="left:657px;top:49.2px;" width="5" height="6.5" viewBox="0 0 5 6.5"><path d="M0 0 L4.2 3.2 L0 6.4z" fill="#f0f0f0"/></svg>
<div class="t" style="left:667px;top:46.68px;font-size:10.3px;color:#f2f2f2;font-weight:bold;letter-spacing:0px;">FB</div>
<svg class="a" style="left:688px;top:49.2px;" width="5" height="6.5" viewBox="0 0 5 6.5"><path d="M0 0 L4.2 3.2 L0 6.4z" fill="#f0f0f0"/></svg>
<div class="t" style="left:699px;top:46.68px;font-size:10.3px;color:#f2f2f2;font-weight:bold;letter-spacing:0px;">FB_Technologia [FB2]</div>
<div class="a" style="left:1422px;top:54px;width:9px;height:2.4px;background:#f4f4f4;"></div>
<svg class="a" style="left:1436.5px;top:47.8px;" width="9" height="9" viewBox="0 0 9 9"><rect x="0" y="0" width="2.5" height="9" fill="#f4f4f4"/><rect x="3.5" y="0" width="5.5" height="5" fill="#f4f4f4"/><rect x="3.5" y="6.5" width="5.5" height="2.5" fill="#f4f4f4"/></svg>
<div class="a" style="left:1450.3px;top:47.8px;width:8.7px;height:8.6px;background:#f4f4f4;"></div>
<svg class="a" style="left:1463.5px;top:47.2px;" width="10" height="10" viewBox="0 0 10 10"><path d="M1 1 L9 9 M9 1 L1 9" stroke="#f4f4f4" stroke-width="1.8"/></svg>
<div class="a" style="left:343px;top:63px;width:1134.8px;height:19px;background:#cfcfcf;"></div>
<div class="a" style="left:343px;top:82px;width:1134.8px;height:2px;background:#adadad;"></div>
<div class="a" style="left:343px;top:84px;width:1134.8px;height:21px;background:#ebebeb;"></div>
<div class="a" style="left:343px;top:105px;width:1134.8px;height:14px;background:#b4b4b4;"></div>
<div class="t" style="left:878px;top:106.99px;font-size:9.4px;color:#f4f4f4;font-weight:bold;letter-spacing:-0.2px;">Block interface</div>
<div class="a" style="left:343px;top:119px;width:1134.8px;height:1px;background:#a4a4a4;"></div>
<div class="a" style="left:343px;top:120px;width:1134.8px;height:4px;background:#e2e2e2;"></div>
<div class="a" style="left:343px;top:124px;width:1134.8px;height:1px;background:#a8a8a8;"></div>
<div class="a" style="left:887px;top:119.2px;width:18px;height:4.3px;background:#e8e8e8;border:1px solid #9a9a9a;border-top:none;box-sizing:border-box;"></div>
<div class="a" style="left:914px;top:119.2px;width:18px;height:4.3px;background:#c8c8c8;border:1px solid #9a9a9a;border-top:none;box-sizing:border-box;"></div>
<svg class="a" style="left:894px;top:119.5px;" width="5" height="3" viewBox="0 0 5 3"><path d="M0 3 L2.5 0 L5 3z" fill="#404040"/></svg>
<svg class="a" style="left:921px;top:120px;" width="5" height="3" viewBox="0 0 5 3"><path d="M0 0 L5 0 L2.5 3z" fill="#101010"/></svg>
<div class="a" style="left:343px;top:125px;width:1120.5px;height:614px;background:#ffffff;"></div>
<div class="t n" style="left:740px;top:148.07px;font-size:9.2px;color:#4a68b8;font-weight:normal;">#c_Csovagas</div>
<div class="a" style="left:811px;top:153px;width:63px;height:7.5px;background:#dcdde8;"></div>
<div class="t" style="left:816px;top:150.07px;font-size:9.2px;color:#1a1a1a;font-weight:bold;">IN</div>
<div class="t n" style="left:852px;top:150.07px;font-size:9.2px;color:#b0b0b8;font-weight:normal;">ENO</div>
<div class="a" style="left:343px;top:125px;width:1134.8px;height:29.5px;background:#e9e9e9;"></div>
<div class="a" style="left:344.5px;top:126px;width:25.0px;height:26px;background:#f6f6f6;"></div>
<div class="a" style="left:370.5px;top:126px;width:25.5px;height:26px;background:#f6f6f6;"></div>
<div class="a" style="left:397.5px;top:126px;width:25.0px;height:26px;background:#f6f6f6;"></div>
<div class="a" style="left:424px;top:126px;width:25px;height:26px;background:#f6f6f6;"></div>
<div class="a" style="left:450.7px;top:126px;width:25.0px;height:26px;background:#f6f6f6;"></div>
<div class="a" style="left:477px;top:126px;width:25.5px;height:26px;background:#f6f6f6;"></div>
<div class="a" style="left:503.7px;top:126px;width:25.000000000000057px;height:26px;background:#f6f6f6;"></div>
<div class="t" style="left:157px;width:400px;text-align:center;top:135.71px;font-size:7.5px;color:#2a2a3a;font-weight:bold;">&amp;</div>
<div class="t" style="left:183.5px;width:400px;text-align:center;top:135.71px;font-size:7.5px;color:#2a2a3a;font-weight:bold;letter-spacing:1.4px;">&gt;=1</div>
<svg class="a" style="left:403px;top:132px;" width="15" height="14" viewBox="0 0 15 14"><rect x="2.5" y="2.5" width="10" height="10" fill="none" stroke="#1a1a1a" stroke-width="1.2"/><rect x="0" y="3" width="2.5" height="1.2" fill="#1a1a1a"/><rect x="12.5" y="3" width="2.5" height="1.2" fill="#1a1a1a"/><text x="7.5" y="10.5" font-size="7" text-anchor="middle" fill="#1a1a1a" font-family="Liberation Sans">??</text></svg>
<svg class="a" style="left:430px;top:135px;" width="14" height="9" viewBox="0 0 14 9"><rect x="2" y="3.5" width="6" height="1.6" fill="#101010"/><rect x="8" y="0" width="2" height="8" fill="#101010"/></svg>
<svg class="a" style="left:455px;top:135px;" width="18" height="9" viewBox="0 0 18 9"><rect x="1" y="3.5" width="6" height="1.6" fill="#101010"/><circle cx="10" cy="4.3" r="2" fill="none" stroke="#101010" stroke-width="1.2"/><rect x="14" y="0" width="2" height="8" fill="#101010"/></svg>
<svg class="a" style="left:482px;top:134px;" width="16" height="10" viewBox="0 0 16 10"><path d="M1 1 v3.5 h11" stroke="#101010" stroke-width="1.6" fill="none"/><path d="M11 1.5 L14.5 4.5 L11 7.5z" fill="#101010"/></svg>
<svg class="a" style="left:508px;top:133px;" width="16" height="12" viewBox="0 0 16 12"><rect x="0" y="5" width="3" height="1.6" fill="#101010"/><path d="M5 1 h-2 v10 h2 M11 1 h2 v10 h-2" stroke="#101010" stroke-width="1.6" fill="none"/><rect x="6.5" y="4.5" width="3" height="1" fill="#303030"/><rect x="6.5" y="6.5" width="3" height="1" fill="#303030"/></svg>
<div class="a" style="left:343.3px;top:186px;width:1120.3px;height:16.2px;background:#d9d9d9;"></div>
<svg class="a" style="left:347.5px;top:190.7px;" width="8" height="5" viewBox="0 0 8 5"><path d="M0 0 L7.6 0 L3.8 4.8z" fill="#101010"/></svg>
<div class="t" style="left:373px;top:188.64px;font-size:10.9px;color:#1e1e28;font-weight:bold;">Network 11:</div>
<div class="t n" style="left:445px;top:190.04px;font-size:8.8px;color:#262626;font-weight:normal;">8 - Csővágás</div>
<div class="a" style="left:369.3px;top:206px;width:1094px;height:16.5px;background:#ffffff;border-top:1px solid #f0f0f0;border-left:1px solid #f0f0f0;box-sizing:border-box;"></div>
<div class="t n" style="left:372.5px;top:207.99px;font-size:9.4px;color:#9a9a9a;font-weight:normal;">Comment</div>
<div class="a" style="left:358px;top:222.8px;width:1105.5px;height:1.6px;background:#e2e2ec;"></div>
<div class="a" style="left:358.8px;top:229px;width:1104.7px;height:510px;background:#ffffff;border-left:1px solid #d4d4e4;border-top:1px solid #d4d4e4;box-sizing:border-box;"></div>
<div class="a" style="left:460.9px;top:236.3px;width:63.0px;height:72.09999999999997px;background:#dedfe9;"></div>
<div class="a" style="left:460.9px;top:236.3px;width:63.0px;height:26.30000000000001px;background:#c9cbda;"></div>
<div class="t" style="left:291.6px;width:400px;text-align:center;top:239.85px;font-size:9px;color:#3a3a48;font-weight:bold;letter-spacing:1px;">==</div>
<div class="a" style="left:481px;top:250px;width:22px;height:11px;background:#d4d6e2;"></div>
<div class="t" style="left:291.6px;width:400px;text-align:center;top:250.38px;font-size:9.3px;color:#1a2a1a;font-weight:bold;">Int</div>
<div class="t" style="left:463.5px;top:267.58px;font-size:9.3px;color:#1a1a1a;font-weight:bold;">IN1</div>
<div class="t" style="left:463.5px;top:297.58px;font-size:9.3px;color:#1a1a1a;font-weight:bold;">IN2</div>
<div class="a" style="left:448.9px;top:271px;width:12.100000000000023px;height:2px;background:#f0a820;"></div>
<div class="a" style="left:448.9px;top:301px;width:12.100000000000023px;height:2px;background:#f0a820;"></div>
<div class="t n" style="right:1054px;text-align:right;top:267.17px;font-size:9.2px;color:#2a2a2a;font-weight:normal;letter-spacing:0.2px;">#sStatusz</div>
<div class="t" style="right:1054px;text-align:right;top:284.17px;font-size:9.2px;color:#1aa0a0;font-weight:bold;">8</div>
<div class="t n" style="right:1054px;text-align:right;top:297.17px;font-size:9.2px;color:#4a68b8;font-weight:normal;letter-spacing:0.1px;">#c_Csovagas</div>
<div class="a" style="left:524px;top:301px;width:24px;height:2px;background:#101010;"></div>
<div class="a" style="left:548px;top:281px;width:63.799999999999955px;height:131.7px;background:#dedfe9;"></div>
<div class="a" style="left:548px;top:281px;width:63.799999999999955px;height:11.5px;background:#c9cbda;"></div>
<div class="t" style="left:379.5px;width:400px;text-align:center;top:283.08px;font-size:9.3px;color:#1a1a1a;font-weight:bold;">&amp;</div>
<div class="t" style="right:966.5px;text-align:right;top:332.17px;font-size:9.2px;color:#1aa0a0;font-weight:bold;">%M120.1</div>
<div class="t n" style="right:966.5px;text-align:right;top:344.17px;font-size:9.2px;color:#2a2a2a;font-weight:normal;">"m_Kihuzo_</div>
<div class="t n" style="right:966.5px;text-align:right;top:355.17px;font-size:9.2px;color:#2a2a2a;font-weight:normal;">running"</div>
<div class="a" style="left:536px;top:360px;width:7px;height:2px;background:#101010;"></div>
<svg class="a" style="left:542.5px;top:357.5px;" width="7" height="7" viewBox="0 0 7 7"><circle cx="3.2" cy="3" r="2.2" fill="#fff" stroke="#101010" stroke-width="1.3"/></svg>
<div class="t" style="right:966.5px;text-align:right;top:377.17px;font-size:9.2px;color:#1aa0a0;font-weight:bold;">%M110.1</div>
<div class="t n" style="right:966.5px;text-align:right;top:388.17px;font-size:9.2px;color:#2a2a2a;font-weight:normal;">"m_Bandazsolo_</div>
<div class="t n" style="right:966.5px;text-align:right;top:400.17px;font-size:9.2px;color:#2a2a2a;font-weight:normal;">running"</div>
<div class="a" style="left:536px;top:405px;width:7px;height:2px;background:#101010;"></div>
<svg class="a" style="left:542.5px;top:402.5px;" width="7" height="7" viewBox="0 0 7 7"><circle cx="3.2" cy="3" r="2.2" fill="#fff" stroke="#101010" stroke-width="1.3"/></svg>
<svg class="a" style="left:550px;top:401.5px;" width="8" height="8" viewBox="0 0 8 8"><path d="M4 0 L4.9 2.6 L7.5 1.2 L5.8 3.6 L8 4.5 L5.4 5.2 L6.5 8 L4 6.2 L1.5 8 L2.6 5.2 L0 4.5 L2.2 3.6 L0.5 1.2 L3.1 2.6z" fill="#d8e820" stroke="#709010" stroke-width="0.6"/><circle cx="4" cy="4.3" r="1.3" fill="#f8f860"/></svg>
<div class="a" style="left:612px;top:405px;width:24px;height:2px;background:#101010;"></div>
<div class="a" style="left:635.7px;top:370px;width:151.0999999999999px;height:146.39999999999998px;background:#dedfe9;"></div>
<div class="a" style="left:635.7px;top:370px;width:151.0999999999999px;height:26.19999999999999px;background:#c9cbda;"></div>
<div class="t" style="left:511px;width:400px;text-align:center;top:370.58px;font-size:9.3px;color:#1aa0a0;font-weight:bold;">%FC15</div>
<div class="t n" style="left:511px;width:400px;text-align:center;top:383.08px;font-size:9.3px;color:#1a1a1a;font-weight:normal;letter-spacing:-0.3px;">"FC_GyartasVege"</div>
<div class="t" style="left:639px;top:401.08px;font-size:9.3px;color:#1a1a1a;font-weight:bold;">EN</div>
<div class="t n" style="left:639px;top:460.58px;font-size:9.3px;color:#1a1a1a;font-weight:normal;letter-spacing:-0.1px;">iReceptHossz</div>
<div class="t n" style="left:639px;top:505.08px;font-size:9.3px;color:#1a1a1a;font-weight:normal;">iDone</div>
<div class="t n" style="right:716.5px;text-align:right;top:490.08px;font-size:9.3px;color:#1a1a1a;font-weight:normal;letter-spacing:-0.1px;">qGyartasVege</div>
<div class="t" style="right:716.5px;text-align:right;top:505.08px;font-size:9.3px;color:#1a1a1a;font-weight:bold;">ENO</div>
<div class="t" style="right:879px;text-align:right;top:436.08px;font-size:9.3px;color:#8a1aa0;font-weight:bold;">mm</div>
<div class="t n" style="right:879px;text-align:right;top:448.17px;font-size:9.2px;color:#2a2a2a;font-weight:normal;">"DB_Recept".</div>
<div class="t n" style="right:879px;text-align:right;top:459.17px;font-size:9.2px;color:#2a2a2a;font-weight:normal;">Hosszak.L</div>
<div class="t n" style="right:879px;text-align:right;top:481.17px;font-size:9.2px;color:#2a2a2a;font-weight:normal;">"DB_</div>
<div class="t n" style="right:879px;text-align:right;top:492.17px;font-size:9.2px;color:#2a2a2a;font-weight:normal;">AktualisHossz".</div>
<div class="t n" style="right:879px;text-align:right;top:503.17px;font-size:9.2px;color:#2a2a2a;font-weight:normal;">Done</div>
<div class="a" style="left:624px;top:465px;width:12px;height:2px;background:#f0a820;"></div>
<div class="a" style="left:624px;top:509px;width:12px;height:2px;background:#f0a820;"></div>
<div class="a" style="left:787px;top:493px;width:10px;height:2px;background:#101010;"></div>
<div class="t n" style="left:801.5px;top:489.17px;font-size:9.2px;color:#2a2a2a;font-weight:normal;letter-spacing:0.15px;">#tGyartasVege</div>
<div class="a" style="left:787px;top:509px;width:111.29999999999995px;height:2px;background:#101010;"></div>
<div class="a" style="left:898.3px;top:489px;width:63.40000000000009px;height:56.700000000000045px;background:#dedfe9;"></div>
<div class="a" style="left:898.3px;top:489px;width:63.40000000000009px;height:11px;background:#c9cbda;"></div>
<div class="t" style="left:730px;width:400px;text-align:center;top:490.58px;font-size:9.3px;color:#1a1a1a;font-weight:bold;">&amp;</div>
<div class="t n" style="right:616.5px;text-align:right;top:534.17px;font-size:9.2px;color:#2a2a2a;font-weight:normal;letter-spacing:0.15px;">#tGyartasVege</div>
<div class="a" style="left:886px;top:538px;width:7px;height:2px;background:#101010;"></div>
<svg class="a" style="left:892px;top:536.2px;" width="7" height="7" viewBox="0 0 7 7"><circle cx="3.2" cy="3" r="2.2" fill="#fff" stroke="#101010" stroke-width="1.3"/></svg>
<svg class="a" style="left:900px;top:535.2px;" width="8" height="8" viewBox="0 0 8 8"><path d="M4 0 L4.9 2.6 L7.5 1.2 L5.8 3.6 L8 4.5 L5.4 5.2 L6.5 8 L4 6.2 L1.5 8 L2.6 5.2 L0 4.5 L2.2 3.6 L0.5 1.2 L3.1 2.6z" fill="#d8e820" stroke="#709010" stroke-width="0.6"/><circle cx="4" cy="4.3" r="1.3" fill="#f8f860"/></svg>
<div class="a" style="left:962px;top:538px;width:24px;height:2px;background:#101010;"></div>
<div class="a" style="left:986px;top:504px;width:63.59999999999991px;height:175.20000000000005px;background:#dedfe9;"></div>
<div class="a" style="left:986px;top:504px;width:63.59999999999991px;height:25.5px;background:#c9cbda;"></div>
<div class="t" style="left:817.8px;width:400px;text-align:center;top:505.58px;font-size:9.3px;color:#1a1a1a;font-weight:bold;">SUB</div>
<div class="a" style="left:993px;top:517px;width:50px;height:11px;background:#d4d6e2;"></div>
<div class="t" style="left:817.8px;width:400px;text-align:center;top:517.08px;font-size:9.3px;color:#1a1a1a;font-weight:bold;letter-spacing:-0.3px;">Auto (Real)</div>
<div class="t" style="left:989px;top:535.08px;font-size:9.3px;color:#1a1a1a;font-weight:bold;">EN</div>
<div class="t" style="left:989px;top:609.08px;font-size:9.3px;color:#1a1a1a;font-weight:bold;">IN1</div>
<div class="t" style="left:989px;top:669.08px;font-size:9.3px;color:#1a1a1a;font-weight:bold;">IN2</div>
<div class="t" style="right:453.5px;text-align:right;top:654.08px;font-size:9.3px;color:#1a1a1a;font-weight:bold;">OUT</div>
<div class="t" style="right:453.5px;text-align:right;top:668.08px;font-size:9.3px;color:#a8a8b4;font-weight:bold;">ENO</div>
<svg class="a" style="left:1005px;top:538px;" width="20" height="137" viewBox="0 0 20 137"><path d="M1 1 H13.5 V134.5 H20" stroke="#8a8a98" stroke-width="1.2" fill="none"/></svg>
<div class="t n" style="right:528.5px;text-align:right;top:572.67px;font-size:9.2px;color:#2a2a2a;font-weight:normal;">"DB_</div>
<div class="t n" style="right:528.5px;text-align:right;top:583.67px;font-size:9.2px;color:#2a2a2a;font-weight:normal;letter-spacing:0.1px;">Beallitasok".</div>
<div class="t n" style="right:528.5px;text-align:right;top:594.67px;font-size:9.2px;color:#2a2a2a;font-weight:normal;letter-spacing:0.1px;">Aranyszabalyzas.</div>
<div class="t n" style="right:528.5px;text-align:right;top:605.67px;font-size:9.2px;color:#2a2a2a;font-weight:normal;">Ertek</div>
<div class="a" style="left:974px;top:613px;width:12px;height:2px;background:#f0a820;"></div>
<div class="a" style="left:889px;top:631.7px;width:82.7px;height:47px;background:#ffffff;border:1px solid #707070;box-sizing:border-box;overflow:hidden;"></div>
<div class="t n" style="right:529.5px;text-align:right;top:632.17px;font-size:9.2px;color:#2a2a2a;font-weight:normal;">"DB_</div>
<div class="t n" style="right:529.5px;text-align:right;top:643.17px;font-size:9.2px;color:#2a2a2a;font-weight:normal;letter-spacing:0.1px;">Beallitasok".</div>
<div class="t n" style="right:529.5px;text-align:right;top:654.17px;font-size:9.2px;color:#2a2a2a;font-weight:normal;letter-spacing:0px;">AranyszabalyzasC</div>
<div class="t n" style="right:529.5px;text-align:right;top:665.17px;font-size:9.2px;color:#2a2a2a;font-weight:normal;letter-spacing:0px;">sokkentes.Ertek</div>
<div class="a" style="left:974px;top:673px;width:12px;height:2px;background:#f0a820;"></div>
<div class="a" style="left:1050px;top:658px;width:11px;height:2px;background:#f0a820;"></div>
<div class="t n" style="left:1064px;top:618.17px;font-size:9.2px;color:#2a2a2a;font-weight:normal;">"DB_</div>
<div class="t n" style="left:1064px;top:629.17px;font-size:9.2px;color:#2a2a2a;font-weight:normal;letter-spacing:0.1px;">Beallitasok".</div>
<div class="t n" style="left:1064px;top:640.17px;font-size:9.2px;color:#2a2a2a;font-weight:normal;letter-spacing:0.1px;">Aranyszabalyzas.</div>
<div class="t n" style="left:1064px;top:651.17px;font-size:9.2px;color:#2a2a2a;font-weight:normal;">Ertek</div>
<div class="a" style="left:1050px;top:672px;width:111.29999999999995px;height:2px;background:#101010;"></div>
<div class="a" style="left:1161.3px;top:652.3px;width:63.600000000000136px;height:86.70000000000005px;background:#dedfe9;"></div>
<div class="a" style="left:1161.3px;top:652.3px;width:63.600000000000136px;height:11.300000000000068px;background:#c9cbda;"></div>
<div class="t" style="left:993.5px;width:400px;text-align:center;top:654.36px;font-size:9px;color:#1a1a1a;font-weight:bold;letter-spacing:1.6px;">&gt;=1</div>
<div class="a" style="left:986px;top:697.2px;width:63.59999999999991px;height:41.799999999999955px;background:#dedfe9;"></div>
<div class="a" style="left:986px;top:697.2px;width:63.59999999999991px;height:26.399999999999977px;background:#c9cbda;"></div>
<div class="t" style="left:817.8px;width:400px;text-align:center;top:700.86px;font-size:9px;color:#3a3a48;font-weight:bold;letter-spacing:1px;">==</div>
<div class="a" style="left:1007px;top:711px;width:22px;height:11px;background:#d4d6e2;"></div>
<div class="t" style="left:817.8px;width:400px;text-align:center;top:711.08px;font-size:9.3px;color:#1a2a1a;font-weight:bold;">Int</div>
<div class="t" style="left:989px;top:727.58px;font-size:9.3px;color:#1a1a1a;font-weight:bold;">IN1</div>
<div class="a" style="left:974px;top:732px;width:12px;height:2px;background:#f0a820;"></div>
<div class="t n" style="right:528.5px;text-align:right;top:727.17px;font-size:9.2px;color:#2a2a2a;font-weight:normal;letter-spacing:0.2px;">#sStatusz</div>
<div class="a" style="left:1463.5px;top:154.4px;width:14.3px;height:584.6px;background:#c4c4c4;"></div>
<div class="a" style="left:1463.7px;top:154.5px;width:13.5px;height:14px;background:#ececec;border:1px solid #bcbcbc;box-sizing:border-box;"></div>
<svg class="a" style="left:1466.5px;top:158.5px;" width="8" height="6" viewBox="0 0 8 6"><path d="M0.5 5 L4 1.5 L7.5 5" stroke="#303030" stroke-width="1.5" fill="none"/></svg>
<div class="a" style="left:1463.7px;top:491px;width:13.5px;height:21px;background:#ececec;border:1px solid #bcbcbc;box-sizing:border-box;"></div>
<div class="a" style="left:1467.5px;top:498.5px;width:6px;height:6px;background:#a0a0a0;"></div>
<div class="a" style="left:1463.7px;top:725px;width:13.5px;height:14px;background:#ececec;border:1px solid #bcbcbc;box-sizing:border-box;"></div>
<svg class="a" style="left:1466.5px;top:729.5px;" width="8" height="6" viewBox="0 0 8 6"><path d="M0.5 1 L4 4.5 L7.5 1" stroke="#303030" stroke-width="1.5" fill="none"/></svg>
<div class="a" style="left:343.3px;top:739px;width:1134.6px;height:15px;background:#c4c4c4;"></div>
<div class="a" style="left:344.4px;top:740px;width:13.2px;height:13.3px;background:#ececec;border:1px solid #bcbcbc;box-sizing:border-box;"></div>
<svg class="a" style="left:348px;top:742.5px;" width="6" height="8" viewBox="0 0 6 8"><path d="M5 0.5 L1.5 4 L5 7.5" stroke="#303030" stroke-width="1.5" fill="none"/></svg>
<div class="a" style="left:357.6px;top:740px;width:560.4px;height:13.3px;background:#e6e6e6;border:1px solid #bcbcbc;box-sizing:border-box;"></div>
<div class="a" style="left:635.5px;top:743.5px;width:6px;height:6px;background:#a0a0a0;"></div>
<div class="a" style="left:1243.7px;top:740px;width:13.2px;height:13.3px;background:#ececec;border:1px solid #bcbcbc;box-sizing:border-box;"></div>
<svg class="a" style="left:1247px;top:742.5px;" width="6" height="8" viewBox="0 0 6 8"><path d="M1 0.5 L4.5 4 L1 7.5" stroke="#303030" stroke-width="1.5" fill="none"/></svg>
<div class="a" style="left:1261.3px;top:740px;width:121.7px;height:13.3px;background:#ffffff;border:1px solid #9a9a9a;box-sizing:border-box;"></div>
<div class="t n" style="left:1264px;top:741.86px;font-size:9px;color:#1a1a1a;font-weight:normal;">100%</div>
<div class="a" style="left:1370px;top:740.5px;width:13px;height:12.3px;background:#e8e8e8;border-left:1px solid #b0b0b0;box-sizing:border-box;"></div>
<svg class="a" style="left:1373px;top:744.5px;" width="7" height="4" viewBox="0 0 7 4"><path d="M0 0 L7 0 L3.5 4z" fill="#101010"/></svg>
<div class="a" style="left:1384px;top:740px;width:79.5px;height:13.3px;background:#e4e4e4;"></div>
<div class="a" style="left:1397px;top:745.5px;width:53px;height:1px;background:#909090;"></div>
<svg class="a" style="left:1396px;top:747px;" width="56" height="4" viewBox="0 0 56 4"><rect x="0.0" y="1" width="1.2" height="2" fill="#808080"/><rect x="3.1" y="1" width="1.2" height="2" fill="#808080"/><rect x="6.2" y="1" width="1.2" height="2" fill="#808080"/><rect x="9.3" y="1" width="1.2" height="2" fill="#808080"/><rect x="12.4" y="1" width="1.2" height="2" fill="#808080"/><rect x="15.5" y="1" width="1.2" height="2" fill="#808080"/><rect x="18.6" y="1" width="1.2" height="2" fill="#808080"/><rect x="21.7" y="1" width="1.2" height="2" fill="#808080"/><rect x="24.8" y="1" width="1.2" height="2" fill="#808080"/><rect x="27.9" y="1" width="1.2" height="2" fill="#808080"/><rect x="31.0" y="1" width="1.2" height="2" fill="#808080"/><rect x="34.1" y="1" width="1.2" height="2" fill="#808080"/><rect x="37.2" y="1" width="1.2" height="2" fill="#808080"/><rect x="40.3" y="1" width="1.2" height="2" fill="#808080"/><rect x="43.4" y="1" width="1.2" height="2" fill="#808080"/><rect x="46.5" y="1" width="1.2" height="2" fill="#808080"/><rect x="49.6" y="1" width="1.2" height="2" fill="#808080"/><rect x="52.7" y="1" width="1.2" height="2" fill="#808080"/></svg>
<div class="a" style="left:1413px;top:742px;width:6px;height:6px;background:#d0d0d0;border:1px solid #808080;box-sizing:border-box;"></div>
<div class="a" style="left:1463.5px;top:739px;width:14.3px;height:15px;background:#c6c6c6;"></div>
<div class="a" style="left:1481px;top:40.3px;width:19px;height:731.7px;background:#b4b4b4;"></div>
<div class="a" style="left:1479.5px;top:40.3px;width:1.5px;height:731.7px;background:#3c3c48;"></div>
<div class="a" style="left:1477.8px;top:40.3px;width:1.7px;height:714.5px;background:#f6f6f6;"></div>
<svg class="a" style="left:1487px;top:45px;" width="6" height="9" viewBox="0 0 6 9"><path d="M5.5 0 L0 4.5 L5.5 9z" fill="#f4f4f4"/></svg>
<div class="a" style="left:1481.5px;top:63.5px;width:15.5px;height:60px;background:#f2f2f2;border:1px solid #c8c8c8;box-sizing:border-box;"></div>
<div class="a" style="left:1481.5px;top:127.5px;width:15.5px;height:75.5px;background:#e6e6e6;border:1px solid #c8c8c8;box-sizing:border-box;"></div>
<svg class="a" style="left:1483px;top:66px;" width="12" height="12" viewBox="0 0 12 12"><rect x="1" y="1" width="8" height="10" fill="#c8d0e8" stroke="#c0a040"/><path d="M4 7 L6.5 10 L11 3" stroke="#20a020" stroke-width="1.8" fill="none"/></svg>
<div class="t" style="left:1469.5px;top:89px;width:40px;text-align:center;transform:rotate(90deg);font-size:10.6px;font-weight:bold;color:#1a1a1a;">Tasks</div>
<svg class="a" style="left:1483px;top:130px;" width="12" height="12" viewBox="0 0 12 12"><path d="M1 1 h4 l1 1 l1 -1 h4 v9 h-4 l-1 1 l-1 -1 h-4z M6 2 v9" fill="#e8ecf8" stroke="#3040a0"/></svg>
<div class="t" style="left:1463px;top:158px;width:54px;text-align:center;transform:rotate(90deg);font-size:10.3px;font-weight:bold;color:#4a4a5a;">Libraries</div>
<div class="a" style="left:341.5px;top:754.6px;width:1138.5px;height:17.6px;background:#b4b4b4;"></div>
<div class="a" style="left:342px;top:754.6px;width:2.5px;height:17.6px;background:#1a1a2a;"></div>
<div class="a" style="left:1180.6px;top:755.5px;width:86.2px;height:16.7px;background:#d0d0d0;"></div>
<div class="a" style="left:1268px;top:755.5px;width:59px;height:16.7px;background:#e8e8e8;"></div>
<div class="a" style="left:1329px;top:755.5px;width:93px;height:16.7px;background:#d0d0d0;"></div>
<div class="a" style="left:1266.8px;top:755.5px;width:1.2px;height:16.7px;background:#606060;"></div>
<div class="a" style="left:1327px;top:755.5px;width:1.5px;height:16.7px;background:#909090;"></div>
<svg class="a" style="left:1184px;top:757px;" width="13" height="13" viewBox="0 0 13 13"><rect x="0.5" y="0.5" width="12" height="12" fill="#dfe4f4" stroke="#a0a8c8"/><circle cx="6" cy="6" r="3.2" fill="none" stroke="#203070" stroke-width="1.5"/><path d="M8 8 L11.5 11.5" stroke="#203070" stroke-width="1.8"/></svg>
<div class="t" style="left:1198px;top:758.50px;font-size:10.5px;color:#6a6a78;font-weight:bold;">Properties</div>
<svg class="a" style="left:1271px;top:757px;" width="13" height="14" viewBox="0 0 13 14"><rect x="0.5" y="0.5" width="12" height="13" fill="#f4f4fa" stroke="#c0c0d8"/><path d="M6 4 v8" stroke="#101040" stroke-width="2"/><circle cx="6" cy="2.5" r="1" fill="#101040"/><path d="M1 1 l3 2 M9 10 l3 2" stroke="#1030a0" stroke-width="1.5"/></svg>
<div class="t" style="left:1286px;top:758.50px;font-size:10.5px;color:#1e1e30;font-weight:bold;">Info</div>
<svg class="a" style="left:1313.5px;top:758.5px;" width="11" height="11" viewBox="0 0 11 11"><circle cx="5.5" cy="5.5" r="5" fill="#f4dc20" stroke="#b09000" stroke-width="0.8"/><rect x="4.6" y="4.6" width="1.8" height="4" fill="#101010"/><rect x="4.6" y="2.2" width="1.8" height="1.6" fill="#101010"/></svg>
<svg class="a" style="left:1332px;top:757px;" width="12" height="13" viewBox="0 0 12 13"><rect x="0.5" y="0.5" width="11" height="12" fill="#e4e8f4" stroke="#a0a8c8"/><path d="M3 2 v5 a2.5 2.5 0 0 0 5 0 v-5" stroke="#203060" stroke-width="1.3" fill="none"/></svg>
<div class="t" style="left:1345.5px;top:758.50px;font-size:10.5px;color:#6a6a78;font-weight:bold;">Diagnostics</div>
<svg class="a" style="left:1438px;top:757px;" width="12" height="12" viewBox="0 0 12 12"><rect x="3" y="0.5" width="8" height="8" fill="#f4f4f4" stroke="#c8c8c8"/><rect x="0.5" y="3" width="8" height="8" fill="#ffffff" stroke="#c8c8c8"/></svg>
<svg class="a" style="left:1452px;top:758px;" width="11" height="10" viewBox="0 0 11 10"><rect x="0.5" y="0.5" width="10" height="9" fill="#c8c8c8" stroke="#e0e0e0"/><rect x="1" y="5" width="9" height="1" fill="#f0f0f0"/></svg>
<svg class="a" style="left:1465px;top:758px;" width="12" height="8" viewBox="0 0 12 8"><path d="M0 7.5 L6 1 L12 7.5z" fill="#f8f8f8"/></svg>
<div class="a" style="left:0px;top:772.2px;width:1500px;height:26.8px;background:#1c1c1c;"></div>
<svg class="a" style="left:26.5px;top:777.5px;" width="6" height="12" viewBox="0 0 6 12"><path d="M5.5 0 L0 6 L5.5 12z" fill="#f0f0f0"/></svg>
<div class="t" style="left:40px;top:778.54px;font-size:11px;color:#f4f4f4;font-weight:bold;">Portal view</div>
<div class="a" style="left:140.7px;top:775.7px;width:88.6px;height:15.3px;background:#c8c8c8;"></div>
<svg class="a" style="left:143px;top:777px;" width="14" height="13" viewBox="0 0 14 13"><rect x="0.5" y="0.5" width="13" height="12" fill="#f0f0f8" stroke="#30408a"/><rect x="0.5" y="0.5" width="13" height="2.5" fill="#30408a"/><rect x="4" y="5" width="3" height="2" fill="#806020"/><rect x="8" y="5" width="3" height="2" fill="#806020"/><rect x="4" y="8.5" width="3" height="2" fill="#806020"/><rect x="8" y="8.5" width="3" height="2" fill="#806020"/></svg>
<div class="t n" style="left:159px;top:779.17px;font-size:9.2px;color:#3a3a44;font-weight:normal;">Overview</div>
<div class="a" style="left:231px;top:775.7px;width:88.3px;height:15.3px;background:#ffffff;"></div>
<svg class="a" style="left:233.5px;top:778.5px;" width="13" height="11" viewBox="0 0 13 11"><rect x="2.5" y="1" width="8" height="7.8" rx="1.8" fill="#1668d8"/><ellipse cx="6.5" cy="4.9" rx="2.6" ry="2.2" fill="#48c4f4"/><rect x="0" y="2.5" width="3" height="1.4" fill="#0c3a9a"/><rect x="0" y="6" width="3" height="1.4" fill="#0c3a9a"/><rect x="10" y="4.2" width="2.5" height="1.4" fill="#0c3a9a"/></svg>
<div class="t" style="left:249.5px;top:779.36px;font-size:9px;color:#2a2a3a;font-weight:bold;">FB_Technolo...</div>
<div class="a" style="left:37px;top:795px;width:225px;height:4px;background:#3c3c3c;"></div>
<div class="a" style="left:379px;top:795px;width:37px;height:4px;background:#505050;"></div>
<div class="a" style="left:1221.5px;top:776.5px;width:16px;height:15px;background:#d8d8d8;border:1px solid #909090;box-sizing:border-box;"></div>
<svg class="a" style="left:1223.5px;top:778.5px;" width="12" height="11" viewBox="0 0 12 11"><rect x="1" y="0.5" width="7" height="5" fill="#f0f0f0" stroke="#505060"/><rect x="0" y="7" width="12" height="3" fill="#404050"/><path d="M9 1 l2 2 l-2 2" stroke="#203080" fill="none"/></svg>
<div class="a" style="left:1241.5px;top:774px;width:1px;height:22px;background:#505050;"></div>
<svg class="a" style="left:1245px;top:778.5px;" width="11.5" height="11.5" viewBox="0 0 11.5 11.5"><circle cx="5.75" cy="5.75" r="5.5" fill="#1a24e0"/><path d="M2.8 5.8 L5 8 L9 3.5" stroke="#ffffff" stroke-width="1.6" fill="none"/></svg>
<div class="t n" style="left:1260px;top:780.04px;font-size:8.8px;color:#e6e6e6;font-weight:normal;">Project SMCSK opened.</div>
<div class="a" style="left:1496px;top:790px;width:1px;height:7px;background:#808080;"></div>
<svg class="a" style="left:10px;top:21.7px;" width="13" height="13" viewBox="0 0 13 13"><rect x="1" y="2" width="9" height="10.5" fill="#f0f0fa" stroke="#8088b0"/><circle cx="9" cy="3.5" r="3" fill="#e8e020"/></svg>
<svg class="a" style="left:27.5px;top:21.7px;" width="13" height="13" viewBox="0 0 13 13"><path d="M0.5 3 h4 l1 1 h6 v8.5 h-11z" fill="#f4d870" stroke="#c8a030"/><path d="M6 2 h4 v3 h2 l-4 4 l-4 -4 h2z" fill="#20a020"/></svg>
<svg class="a" style="left:45px;top:21.7px;" width="12" height="13" viewBox="0 0 12 13"><rect x="0.5" y="0.5" width="11" height="12" fill="#1a6ad8" stroke="#0c3a90"/><rect x="3" y="1" width="6" height="4.5" fill="#ffffff"/><rect x="3.5" y="8.5" width="5" height="4" fill="#e8e8f0"/></svg>
<svg class="a" style="left:120px;top:21.7px;" width="13" height="13" viewBox="0 0 13 13"><rect x="3" y="1" width="7" height="6" fill="#d8dce8" stroke="#50608a"/><rect x="0.5" y="7" width="12" height="5" rx="1.5" fill="#3a50e0"/></svg>
<div class="a" style="left:137px;top:22px;width:1px;height:16px;background:#c2c2c2;"></div>
<div class="a" style="left:138px;top:22px;width:1px;height:16px;background:#e6e6e6;"></div>
<svg class="a" style="left:144px;top:21.7px;" width="10" height="13" viewBox="0 0 10 13"><path d="M2 0.5 L7.5 8 M8 0.5 L2.5 8" stroke="#707070" stroke-width="1.4"/><circle cx="2.5" cy="10.5" r="1.8" fill="none" stroke="#707070" stroke-width="1.2"/><circle cx="7.5" cy="10.5" r="1.8" fill="none" stroke="#707070" stroke-width="1.2"/></svg>
<svg class="a" style="left:161px;top:21.7px;" width="13" height="13" viewBox="0 0 13 13"><rect x="0.5" y="2" width="7" height="8" fill="#e8e8e8" stroke="#a0a0a0"/><rect x="4.5" y="4" width="7" height="8" fill="#e8e8e8" stroke="#909090"/></svg>
<svg class="a" style="left:180.5px;top:21.7px;" width="12" height="13" viewBox="0 0 12 13"><rect x="0.5" y="2" width="8" height="10" fill="#e8e8e8" stroke="#a0a0a0"/><rect x="5" y="6" width="6.5" height="6.5" fill="#e8e8e8" stroke="#909090"/></svg>
<svg class="a" style="left:200px;top:23.2px;" width="10" height="10" viewBox="0 0 10 10"><path d="M0.5 0.5 L9.5 9.5 M9.5 0.5 L0.5 9.5" stroke="#202020" stroke-width="1.5"/></svg>
<div class="a" style="left:216px;top:22px;width:1px;height:16px;background:#c2c2c2;"></div>
<div class="a" style="left:217px;top:22px;width:1px;height:16px;background:#e6e6e6;"></div>
<svg class="a" style="left:220px;top:21.7px;" width="23" height="13" viewBox="0 0 23 13"><path d="M2 2 v4 h4" stroke="#6a6a6a" stroke-width="1.8" fill="none"/><path d="M2.5 5.5 a5 5 0 1 1 6 6" stroke="#6a6a6a" stroke-width="1.8" fill="none"/><path d="M16 4 v5 M14 7 l2 2 l2-2 M14 11 h4" stroke="#808080" stroke-width="1.2" fill="none"/></svg>
<svg class="a" style="left:247.5px;top:21.7px;" width="23" height="13" viewBox="0 0 23 13"><path d="M11 2 v4 h-4" stroke="#6a6a6a" stroke-width="1.8" fill="none"/><path d="M10.5 5.5 a5 5 0 1 0 -6 6" stroke="#6a6a6a" stroke-width="1.8" fill="none"/><path d="M18 4 v5 M16 7 l2 2 l2-2 M16 11 h4" stroke="#808080" stroke-width="1.2" fill="none"/></svg>
<div class="a" style="left:274px;top:22px;width:1px;height:16px;background:#c2c2c2;"></div>
<div class="a" style="left:275px;top:22px;width:1px;height:16px;background:#e6e6e6;"></div>
<svg class="a" style="left:280px;top:21.7px;" width="13" height="13" viewBox="0 0 13 13"><rect x="0.5" y="0.5" width="8" height="6" fill="#e8e8f0" stroke="#506090"/><rect x="4" y="5" width="8" height="7.5" fill="#d0dcf0" stroke="#2a4a8a"/></svg>
<svg class="a" style="left:298.5px;top:21.7px;" width="13" height="13" viewBox="0 0 13 13"><rect x="0.5" y="0.5" width="12" height="12" fill="#303848"/><rect x="1.5" y="1.5" width="3" height="10" fill="#20c0d0"/><path d="M8 2 v6 M5.5 6 l2.5 3 l2.5 -3" stroke="#ffffff" stroke-width="2" fill="none"/></svg>
<svg class="a" style="left:317.5px;top:21.7px;" width="13" height="13" viewBox="0 0 13 13"><rect x="0.5" y="0.5" width="12" height="12" fill="#8a8a8a"/><rect x="1.5" y="1.5" width="3" height="10" fill="#c8c8c8"/><path d="M8 11 v-6 M5.5 7 l2.5 -3 l2.5 3" stroke="#ffffff" stroke-width="2" fill="none"/></svg>
<svg class="a" style="left:336px;top:21.7px;" width="13" height="13" viewBox="0 0 13 13"><rect x="1" y="0.5" width="11" height="9" fill="#1848a8" stroke="#304060"/><rect x="2.5" y="2" width="8" height="6" fill="#3a80c8"/><rect x="4" y="3" width="2" height="4" fill="#70e0f0"/><rect x="0" y="10" width="13" height="3" fill="#505870"/></svg>
<svg class="a" style="left:355px;top:21.7px;" width="13" height="13" viewBox="0 0 13 13"><rect x="0.5" y="0.5" width="12" height="12" fill="#e0e0e0" stroke="#8a8a8a"/><path d="M3 3 L8 6 L3 9z" fill="#7a7a7a"/><text x="7" y="12.5" font-size="5" fill="#404040" font-family="Liberation Sans" font-weight="bold">RT</text></svg>
<div class="a" style="left:372px;top:22px;width:1px;height:16px;background:#c2c2c2;"></div>
<div class="a" style="left:373px;top:22px;width:1px;height:16px;background:#e6e6e6;"></div>
<svg class="a" style="left:376px;top:21.7px;" width="14" height="13" viewBox="0 0 14 13"><path d="M1 12 L12 1" stroke="#f08030" stroke-width="4"/><circle cx="6.5" cy="6.5" r="3.5" fill="#e85a18"/></svg>
<svg class="a" style="left:439px;top:21.7px;" width="13" height="13" viewBox="0 0 13 13"><path d="M1 12 L12 1" stroke="#a0a0a0" stroke-width="3.5"/><circle cx="6.5" cy="6.5" r="3" fill="#8a8a8a"/></svg>
<div class="a" style="left:503px;top:22px;width:1px;height:16px;background:#c2c2c2;"></div>
<div class="a" style="left:504px;top:22px;width:1px;height:16px;background:#e6e6e6;"></div>
<svg class="a" style="left:509px;top:21.7px;" width="13" height="13" viewBox="0 0 13 13"><circle cx="4" cy="3" r="2" fill="#3aa0c0"/><rect x="1" y="6" width="6" height="6" fill="#3aa0c0" stroke="#1a5090"/><text x="8" y="12" font-size="9" font-weight="bold" fill="#101050" font-family="Liberation Sans">?</text></svg>
<svg class="a" style="left:527.5px;top:21.7px;" width="13" height="13" viewBox="0 0 13 13"><rect x="0.5" y="0.5" width="12" height="12" fill="#505868"/><rect x="1.5" y="1.5" width="3" height="10" fill="#30c0c0"/><path d="M6.5 6 L11 9 L6.5 12z" fill="#30c060"/></svg>
<svg class="a" style="left:546.75px;top:21.7px;" width="13" height="13" viewBox="0 0 13 13"><rect x="0.5" y="0.5" width="12" height="12" fill="#505868"/><rect x="1.5" y="1.5" width="3" height="10" fill="#30c0c0"/><rect x="7.5" y="8" width="4" height="4" fill="#e01010"/></svg>
<div class="a" style="left:564px;top:22px;width:1px;height:16px;background:#c2c2c2;"></div>
<div class="a" style="left:565px;top:22px;width:1px;height:16px;background:#e6e6e6;"></div>
<svg class="a" style="left:570px;top:21.7px;" width="13" height="13" viewBox="0 0 13 13"><path d="M1.5 3 L10 11.5 M10 3 L1.5 11.5" stroke="#101840" stroke-width="2"/><rect x="7" y="0.5" width="5" height="4" fill="#f0f0f8" stroke="#6070a0"/></svg>
<div class="a" style="left:586px;top:22px;width:1px;height:16px;background:#c2c2c2;"></div>
<div class="a" style="left:587px;top:22px;width:1px;height:16px;background:#e6e6e6;"></div>
<svg class="a" style="left:591px;top:21.7px;" width="13" height="13" viewBox="0 0 13 13"><rect x="0.5" y="0.5" width="12" height="12" fill="#f4f4fa" stroke="#8088c8"/><rect x="0.5" y="5.5" width="12" height="2" fill="#8088c8"/></svg>
<svg class="a" style="left:610px;top:21.7px;" width="13" height="13" viewBox="0 0 13 13"><rect x="0.5" y="0.5" width="12" height="12" fill="#f4f4fa" stroke="#8088c8"/><rect x="5.5" y="0.5" width="2" height="12" fill="#8088c8"/></svg>
<div class="a" style="left:628px;top:22px;width:1px;height:16px;background:#c2c2c2;"></div>
<div class="a" style="left:629px;top:22px;width:1px;height:16px;background:#e6e6e6;"></div>
<svg class="a" style="left:735px;top:21.7px;" width="13" height="13" viewBox="0 0 13 13"><rect x="0.5" y="0.5" width="7" height="9" fill="#f0f0f8" stroke="#a0a8c8"/><rect x="3" y="6" width="4" height="6" rx="1" fill="#1a2a70"/><rect x="8" y="6" width="4" height="6" rx="1" fill="#1a2a70"/></svg>
<svg class="a" style="left:348px;top:87px;" width="14" height="14" viewBox="0 0 14 14"><path d="M1.5 7 v6 M12.5 7 v6" stroke="#1a3ae0" stroke-width="1.6"/><path d="M2.5 10 l3.5 -2.8 v5.6z M11.5 10 l-3.5 -2.8 v5.6z" fill="#1a3ae0"/><path d="M9 0.5 l1 2 l2.2 0.3 l-1.6 1.5 l0.5 2.2 l-2.1 -1.1 l-2 1.1 l0.4 -2.2 l-1.6 -1.5 l2.2 -0.3z" fill="#e8e040" stroke="#90a020" stroke-width="0.5"/></svg>
<svg class="a" style="left:366px;top:87px;" width="14" height="14" viewBox="0 0 14 14"><path d="M1.5 7 v6 M12.5 7 v6" stroke="#1a3ae0" stroke-width="1.6"/><path d="M2.5 10 l3.5 -2.8 v5.6z M11.5 10 l-3.5 -2.8 v5.6z" fill="#1a3ae0"/><path d="M6 0.5 L11.5 6 M11.5 0.5 L6 6" stroke="#101030" stroke-width="1.5"/></svg>
<svg class="a" style="left:386px;top:87px;" width="14" height="14" viewBox="0 0 14 14"><rect x="0" y="5" width="9" height="2" fill="#b0b0b0"/><rect x="0" y="8" width="9" height="2" fill="#b0b0b0"/><rect x="0" y="11" width="9" height="2" fill="#b0b0b0"/><circle cx="10" cy="5" r="3" fill="#a8a8a8"/></svg>
<svg class="a" style="left:405px;top:87px;" width="14" height="14" viewBox="0 0 14 14"><rect x="0" y="5" width="9" height="2" fill="#b0b0b0"/><rect x="0" y="8" width="9" height="2" fill="#b0b0b0"/><rect x="0" y="11" width="9" height="2" fill="#b0b0b0"/><circle cx="10" cy="5" r="3" fill="#a8a8a8"/></svg>
<div class="a" style="left:421px;top:84px;width:1px;height:19px;background:#c4c4c4;"></div>
<div class="a" style="left:422px;top:84px;width:1px;height:19px;background:#f8f8f8;"></div>
<svg class="a" style="left:427px;top:87px;" width="14" height="14" viewBox="0 0 14 14"><rect x="1" y="1" width="6" height="9" rx="2.5" fill="#9a9a9a"/><path d="M8 12 a2 2 0 1 0 -1 -3" stroke="#707070" stroke-width="1.2" fill="none"/></svg>
<div class="a" style="left:444.4px;top:84px;width:1px;height:19px;background:#c4c4c4;"></div>
<div class="a" style="left:445.4px;top:84px;width:1px;height:19px;background:#f8f8f8;"></div>
<svg class="a" style="left:450px;top:87px;" width="14" height="14" viewBox="0 0 14 14"><rect x="0" y="1" width="2" height="12" fill="#505050"/><rect x="3" y="2" width="10" height="2" fill="#606060"/><rect x="3" y="6" width="10" height="2" fill="#606060"/><rect x="3" y="10" width="10" height="2" fill="#606060"/></svg>
<svg class="a" style="left:469px;top:87px;" width="14" height="14" viewBox="0 0 14 14"><rect x="0.5" y="0.5" width="12" height="12" fill="#e8ecff" stroke="#1a3ad0" stroke-width="1.2"/><rect x="1" y="6" width="11" height="2" fill="#1a3ad0"/></svg>
<svg class="a" style="left:487px;top:87px;" width="14" height="14" viewBox="0 0 14 14"><rect x="0.5" y="2" width="12" height="4" fill="#2a4ae0"/><rect x="0.5" y="8" width="12" height="4" fill="#2a4ae0"/></svg>
<div class="a" style="left:504px;top:84.5px;width:17px;height:18px;background:#f4f6ff;border:1px solid #8098d0;box-sizing:border-box;border-radius:2px;"></div>
<svg class="a" style="left:506px;top:87px;" width="14" height="14" viewBox="0 0 14 14"><ellipse cx="6.5" cy="6" rx="6" ry="4.5" fill="#ffffff" stroke="#5060b0" stroke-width="1.2"/><path d="M3 10 l-1 3 l3 -2" fill="#5060b0"/><circle cx="4" cy="6" r="0.8" fill="#202040"/><circle cx="6.5" cy="6" r="0.8" fill="#202040"/><circle cx="9" cy="6" r="0.8" fill="#202040"/></svg>
<svg class="a" style="left:525px;top:87px;" width="14" height="14" viewBox="0 0 14 14"><rect x="3" y="2" width="9" height="10" fill="#8040c0"/><rect x="0" y="4" width="3" height="2" fill="#8040c0"/><rect x="0" y="8" width="3" height="2" fill="#8040c0"/></svg>
<svg class="a" style="left:539px;top:89px;" width="7" height="10" viewBox="0 0 7 10"><path d="M3.5 1 v5 M1 4 l2.5 2.5 l2.5 -2.5" stroke="#101010" stroke-width="1.4" fill="none"/><rect x="0" y="8.5" width="7" height="1.3" fill="#101010"/></svg>
<svg class="a" style="left:552px;top:87px;" width="14" height="14" viewBox="0 0 14 14"><rect x="2" y="1" width="10" height="11" rx="3" fill="#8040c0"/><rect x="4" y="3" width="6" height="2" fill="#d0c0f0"/></svg>
<svg class="a" style="left:567px;top:89px;" width="7" height="10" viewBox="0 0 7 10"><path d="M3.5 1 v5 M1 4 l2.5 2.5 l2.5 -2.5" stroke="#101010" stroke-width="1.4" fill="none"/><rect x="0" y="8.5" width="7" height="1.3" fill="#101010"/></svg>
<svg class="a" style="left:579px;top:87px;" width="14" height="14" viewBox="0 0 14 14"><path d="M3 3.5 l2.5 -2.5 h8 v5 h-8z" fill="#8040c0"/><path d="M1.5 8 v5.5 M12.5 8 v5.5" stroke="#2a50d0" stroke-width="1.5"/><path d="M2.5 10.7 l3 -2.4 v4.8z M11.5 10.7 l-3 -2.4 v4.8z" fill="#2a50d0"/></svg>
<svg class="a" style="left:597px;top:89px;" width="7" height="10" viewBox="0 0 7 10"><path d="M3.5 1 v5 M1 4 l2.5 2.5 l2.5 -2.5" stroke="#101010" stroke-width="1.4" fill="none"/><rect x="0" y="8.5" width="7" height="1.3" fill="#101010"/></svg>
<div class="a" style="left:605px;top:84.5px;width:16.5px;height:18px;background:#e8ecf8;border:1px solid #8098d0;box-sizing:border-box;border-radius:2px;"></div>
<svg class="a" style="left:607px;top:87px;" width="14" height="14" viewBox="0 0 14 14"><rect x="1" y="2" width="11" height="10" fill="#f8f8ff" stroke="#6070a0"/><rect x="3" y="5" width="8" height="1.5" fill="#202040"/><rect x="3" y="8.5" width="8" height="1.5" fill="#202040"/></svg>
<div class="a" style="left:624px;top:84.5px;width:17px;height:18px;background:#e8ecf8;border:1px solid #8098d0;box-sizing:border-box;border-radius:2px;"></div>
<svg class="a" style="left:626px;top:87px;" width="14" height="14" viewBox="0 0 14 14"><rect x="1" y="2" width="3" height="3" fill="none" stroke="#6070a0"/><rect x="1" y="6" width="3" height="3" fill="none" stroke="#6070a0"/><rect x="1" y="10" width="3" height="3" fill="none" stroke="#6070a0"/><path d="M9 1 L10.5 4 L13.5 4.5 L11 6.5 L12 9.5 L9 8 L6 9.5 L7 6.5 L4.5 4.5 L7.5 4z" fill="#f0c020"/></svg>
<div class="a" style="left:644px;top:84px;width:1px;height:19px;background:#c4c4c4;"></div>
<div class="a" style="left:645px;top:84px;width:1px;height:19px;background:#f8f8f8;"></div>
<svg class="a" style="left:649px;top:87px;" width="14" height="14" viewBox="0 0 14 14"><path d="M6 13 a4.5 4.5 0 0 1 -1 -8.5" stroke="#102060" stroke-width="2.2" fill="none"/><path d="M4 1.5 l4.5 2.8 l-4 2.6z" fill="#102060"/><circle cx="10.6" cy="3.8" r="3.2" fill="#e02828"/><path d="M9.2 2.4 l2.8 2.8 M12 2.4 l-2.8 2.8" stroke="#ffffff" stroke-width="1"/></svg>
<svg class="a" style="left:667px;top:87px;" width="14" height="14" viewBox="0 0 14 14"><path d="M5 1.5 a4.5 4.5 0 0 0 -1 8.5" stroke="#102060" stroke-width="2.2" fill="none"/><path d="M2.5 8 l4.5 2.5 l-4 3z" fill="#102060"/><circle cx="10.5" cy="10.3" r="3.2" fill="#e02828"/><path d="M9.1 8.9 l2.8 2.8 M11.9 8.9 l-2.8 2.8" stroke="#ffffff" stroke-width="1"/></svg>
<svg class="a" style="left:686px;top:87px;" width="14" height="14" viewBox="0 0 14 14"><path d="M5 13 a4.5 4.5 0 0 1 -1 -8" stroke="#808080" stroke-width="2" fill="none"/><path d="M3.5 2 l4 2.5 l-3.5 2.5z" fill="#808080"/><rect x="7" y="1" width="6.5" height="11" fill="#a8a8a8"/><rect x="8" y="3" width="4.5" height="1" fill="#d0d0d0"/><rect x="8" y="6" width="4.5" height="1" fill="#d0d0d0"/></svg>
<svg class="a" style="left:704px;top:87px;" width="14" height="14" viewBox="0 0 14 14"><path d="M5 1.5 a4.5 4.5 0 0 0 -1 8" stroke="#808080" stroke-width="2" fill="none"/><path d="M2.5 8 l4 2.5 l-3.5 2.5z" fill="#808080"/><rect x="7" y="2" width="6.5" height="11" fill="#a8a8a8"/><rect x="8" y="4" width="4.5" height="1" fill="#d0d0d0"/><rect x="8" y="7" width="4.5" height="1" fill="#d0d0d0"/></svg>
<svg class="a" style="left:724px;top:87px;" width="14" height="14" viewBox="0 0 14 14"><path d="M2 1 h6 l4 3.5 l-4 3.5 h-6z" fill="#304050"/><rect x="0" y="2.5" width="2.5" height="1.3" fill="#304050"/><rect x="0" y="5" width="2.5" height="1.3" fill="#304050"/><path d="M4 3 l3 1.5 l-3 1.5z" fill="#ffffff"/><path d="M3 9 L6.5 12.5 L12.5 6.5" stroke="#20a030" stroke-width="2.2" fill="none"/></svg>
<div class="a" style="left:740px;top:84px;width:1px;height:19px;background:#c4c4c4;"></div>
<div class="a" style="left:741px;top:84px;width:1px;height:19px;background:#f8f8f8;"></div>
<svg class="a" style="left:745px;top:87px;" width="14" height="14" viewBox="0 0 14 14"><path d="M5 1.5 a4.5 4.5 0 0 0 -1 8" stroke="#102060" stroke-width="2.2" fill="none"/><path d="M2 8 l4.5 2.5 l-4 3z" fill="#102060"/><rect x="8" y="4" width="6" height="1.6" fill="#7080a0"/><rect x="8" y="7" width="6" height="1.6" fill="#7080a0"/><rect x="8" y="10" width="6" height="1.6" fill="#3a60e0"/></svg>
<svg class="a" style="left:766px;top:87px;" width="14" height="14" viewBox="0 0 14 14"><rect x="0" y="0" width="2" height="7" fill="#303030"/><rect x="4" y="5" width="8" height="2" fill="#909090"/><rect x="4" y="8" width="8" height="2" fill="#909090"/><rect x="4" y="11" width="8" height="2" fill="#909090"/></svg>
<svg class="a" style="left:784px;top:87px;" width="14" height="14" viewBox="0 0 14 14"><path d="M1 1 l4 4" stroke="#404040" stroke-width="1.5"/><rect x="4" y="5" width="9" height="2" fill="#909090"/><rect x="4" y="8" width="9" height="2" fill="#909090"/><rect x="4" y="11" width="9" height="2" fill="#909090"/></svg>
<div class="a" style="left:800px;top:84px;width:1px;height:19px;background:#c4c4c4;"></div>
<div class="a" style="left:801px;top:84px;width:1px;height:19px;background:#f8f8f8;"></div>
<svg class="a" style="left:807px;top:87px;" width="14" height="14" viewBox="0 0 14 14"><path d="M5 1.5 a4.5 4.5 0 0 0 -1 8" stroke="#102060" stroke-width="2.2" fill="none"/><path d="M2 8 l4.5 2.5 l-4 3z" fill="#102060"/><path d="M8 3 h4 v10 l-2 -1.5 l-2 1.5z" fill="#2a40d0"/></svg>
<svg class="a" style="left:826px;top:87px;" width="14" height="14" viewBox="0 0 14 14"><path d="M5 13 a4.5 4.5 0 0 1 -1 -8" stroke="#102060" stroke-width="2.2" fill="none"/><path d="M3.5 2 l4.5 2.5 l-4 3z" fill="#102060"/><path d="M8 1 h4 v10 l-2 -1.5 l-2 1.5z" fill="#2a40d0"/></svg>
<div class="a" style="left:843px;top:84px;width:1px;height:19px;background:#c4c4c4;"></div>
<div class="a" style="left:844px;top:84px;width:1px;height:19px;background:#f8f8f8;"></div>
<svg class="a" style="left:848px;top:87px;" width="14" height="14" viewBox="0 0 14 14"><circle cx="4.5" cy="10" r="3.5" fill="#9a9a9a"/><circle cx="8.5" cy="5" r="3" fill="none" stroke="#707070" stroke-width="1.4"/><path d="M10.5 7 L13 10" stroke="#707070" stroke-width="1.5"/></svg>
<svg class="a" style="left:866px;top:87px;" width="14" height="14" viewBox="0 0 14 14"><circle cx="3.5" cy="4" r="2.5" fill="none" stroke="#203070" stroke-width="1.4"/><circle cx="10" cy="4" r="2.5" fill="none" stroke="#203070" stroke-width="1.4"/><path d="M6 12 L9 10 L6 8z" fill="#30c040"/></svg>
<div class="a" style="left:883px;top:84px;width:1px;height:19px;background:#c4c4c4;"></div>
<div class="a" style="left:884px;top:84px;width:1px;height:19px;background:#f8f8f8;"></div>
<svg class="a" style="left:888px;top:87px;" width="14" height="14" viewBox="0 0 14 14"><rect x="1" y="1" width="8" height="12" rx="3.5" fill="#e85a20"/><rect x="2" y="2" width="6" height="3" rx="1.5" fill="#f4f4f4"/><rect x="8" y="8" width="5" height="5" fill="#2a4a90"/></svg>
<svg class="a" style="left:1453px;top:87px;" width="13" height="13" viewBox="0 0 13 13"><rect x="0.5" y="0.5" width="12" height="11" fill="#f0f0fa" stroke="#8088c0"/><rect x="1" y="4" width="11" height="1.3" fill="#8088c0"/><rect x="7" y="7" width="6" height="6" fill="#2a50a0"/></svg>
<svg class="a" style="left:313px;top:45px;" width="8" height="9" viewBox="0 0 8 9"><rect x="0.5" y="0.5" width="7" height="8" fill="none" stroke="#e8e8e8"/><rect x="2" y="0.5" width="1" height="8" fill="#e8e8e8"/></svg>
<svg class="a" style="left:330px;top:44.5px;" width="6" height="10" viewBox="0 0 6 10"><path d="M5.5 0 L0 5 L5.5 10z" fill="#f4f4f4"/></svg>
<svg class="a" style="left:23px;top:84px;" width="13" height="13" viewBox="0 0 13 13"><rect x="0.5" y="0.5" width="12" height="12" fill="#f0f0f0" stroke="#909090"/><rect x="3" y="3" width="3" height="2" fill="#707070"/><rect x="7" y="7" width="3" height="3" fill="#707070"/></svg>
<div class="a" style="left:301.5px;top:83.5px;width:17.5px;height:15.5px;background:#e8ecf4;border:1px solid #7090c8;box-sizing:border-box;border-radius:2px;"></div>
<svg class="a" style="left:304.5px;top:86px;" width="11" height="10" viewBox="0 0 11 10"><rect x="0.5" y="0.5" width="10" height="9" fill="#d4d8e4" stroke="#8890a8"/><rect x="3" y="2" width="1" height="6" fill="#8890a8"/><rect x="6" y="2" width="1" height="6" fill="#8890a8"/></svg>
<svg class="a" style="left:321px;top:84px;" width="15" height="14" viewBox="0 0 15 14"><rect x="0.5" y="3" width="10" height="10" fill="#f0e8c0" stroke="#404070"/><rect x="2" y="6" width="2" height="2" fill="#c07020"/><rect x="5" y="6" width="2" height="2" fill="#c07020"/><path d="M8 1 h4 v4 h2 l-4 4 l-4-4 h2z" fill="#20a020"/></svg>
</body></html>
